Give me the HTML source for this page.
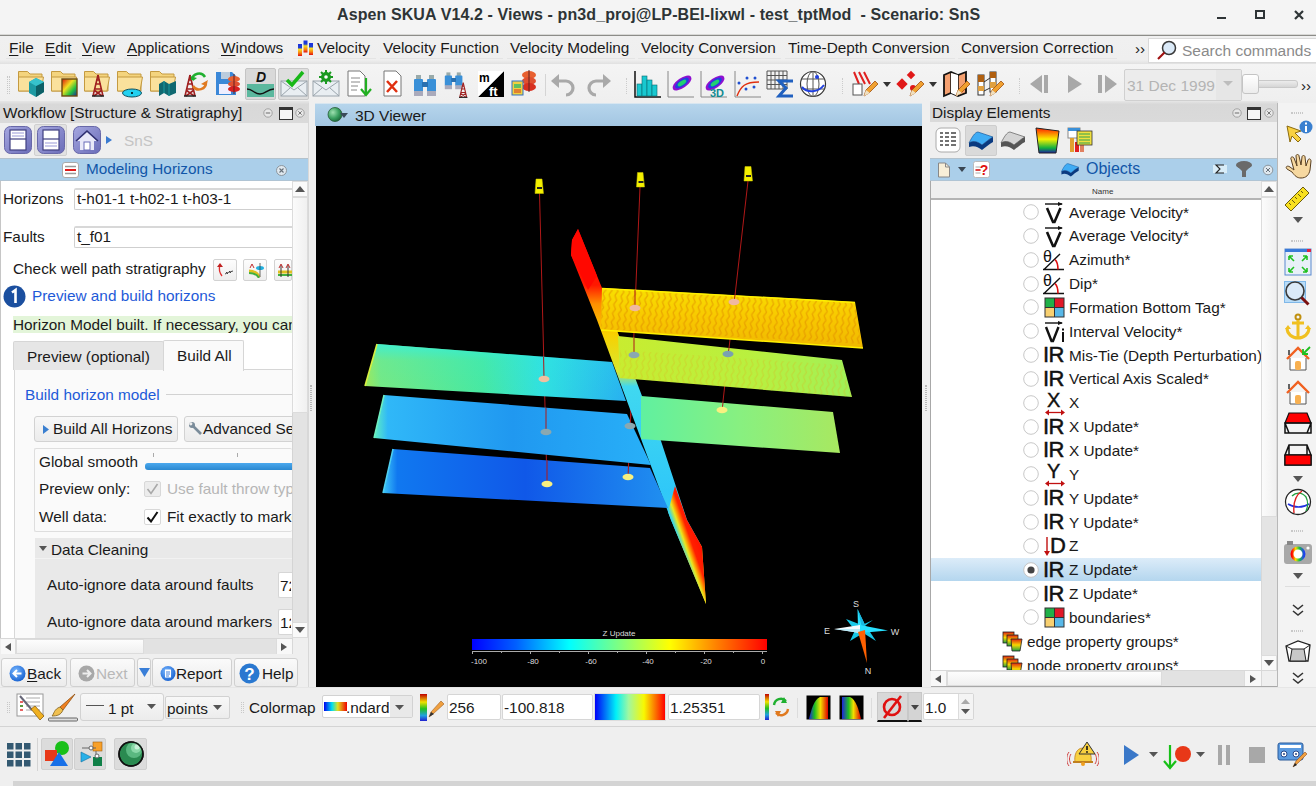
<!DOCTYPE html>
<html><head><meta charset="utf-8">
<style>
*{margin:0;padding:0;box-sizing:border-box}
html,body{width:1316px;height:786px;overflow:hidden;background:#efefef;font-family:"Liberation Sans",sans-serif;font-size:15px;color:#1a1a1a;position:relative}
.a{position:absolute;display:block}
.t{position:absolute;white-space:nowrap}
.u{text-decoration:underline;text-decoration-thickness:1px;text-underline-offset:2px}
</style></head><body>
<div class="a" style="left:0px;top:0px;width:1316px;height:35px;background:#f4f4f4"></div>
<div class="a" style="left:0px;top:35px;width:1316px;height:1px;background:#8c8c88"></div>
<div class="a" style="left:0px;top:34px;width:1316px;height:1px;background:#d8d8d6"></div>
<div class="t" style="left:337px;top:6px;font-size:16px;line-height:18px;font-weight:bold;color:#2e3436;letter-spacing:0.1px">Aspen SKUA V14.2 - Views - pn3d_proj@LP-BEI-lixwl - test_tptMod&nbsp; - Scenario: SnS</div>
<div class="a" style="left:1217px;top:17px;width:9px;height:2px;background:#2e3436"></div>
<div class="a" style="left:1255px;top:10px;width:10px;height:9px;border:2px solid #2e3436"></div>
<svg class="a" style="left:1293px;top:9px;" width="12" height="12" viewBox="0 0 12 12"><path d="M2 2L10 10M10 2L2 10" stroke="#2e3436" stroke-width="2.2"/></svg>
<div class="a" style="left:0px;top:36px;width:1316px;height:28px;background:linear-gradient(#f0f0f0,#efefef 85%,#e0e0e0)"></div>
<div class="a" style="left:6px;top:58px;width:36px;height:1px;background:#e4e4e4"></div>
<div class="t" style="left:9px;top:39px;font-size:15.35px;line-height:17.35px;"><span class="u">F</span>ile</div>
<div class="a" style="left:42px;top:58px;width:34px;height:1px;background:#e4e4e4"></div>
<div class="t" style="left:45px;top:39px;font-size:15.35px;line-height:17.35px;"><span class="u">E</span>dit</div>
<div class="a" style="left:79px;top:58px;width:36px;height:1px;background:#e4e4e4"></div>
<div class="t" style="left:82px;top:39px;font-size:15.35px;line-height:17.35px;"><span class="u">V</span>iew</div>
<div class="a" style="left:124px;top:58px;width:86px;height:1px;background:#e4e4e4"></div>
<div class="t" style="left:127px;top:39px;font-size:15.35px;line-height:17.35px;"><span class="u">A</span>pplications</div>
<div class="a" style="left:218px;top:58px;width:66px;height:1px;background:#e4e4e4"></div>
<div class="t" style="left:221px;top:39px;font-size:15.35px;line-height:17.35px;"><span class="u">W</span>indows</div>
<svg class="a" style="left:297px;top:39px;" width="17" height="18" viewBox="0 0 17 18"><defs><linearGradient id="vbar" x1="0" y1="0" x2="0" y2="1"><stop offset="0" stop-color="#1a30e0"/><stop offset=".3" stop-color="#2040d0"/><stop offset=".45" stop-color="#f8e020"/><stop offset=".75" stop-color="#f88010"/><stop offset="1" stop-color="#e01010"/></linearGradient></defs><rect x="1" y="5" width="4" height="12" fill="url(#vbar)"/><rect x="6.5" y="1.5" width="4" height="12" fill="url(#vbar)"/><rect x="12" y="4" width="4" height="12" fill="url(#vbar)"/></svg>
<div class="a" style="left:293px;top:58px;width:83px;height:1px;background:#e4e4e4"></div>
<div class="a" style="left:314px;top:58px;width:62px;height:1px;background:#e4e4e4"></div>
<div class="t" style="left:317px;top:39px;font-size:15.35px;line-height:17.35px;">Velocity</div>
<div class="a" style="left:380px;top:58px;width:123px;height:1px;background:#e4e4e4"></div>
<div class="t" style="left:383px;top:39px;font-size:15.35px;line-height:17.35px;">Velocity Function</div>
<div class="a" style="left:507px;top:58px;width:128px;height:1px;background:#e4e4e4"></div>
<div class="t" style="left:510px;top:39px;font-size:15.35px;line-height:17.35px;">Velocity Modeling</div>
<div class="a" style="left:638px;top:58px;width:143px;height:1px;background:#e4e4e4"></div>
<div class="t" style="left:641px;top:39px;font-size:15.35px;line-height:17.35px;">Velocity Conversion</div>
<div class="a" style="left:785px;top:58px;width:170px;height:1px;background:#e4e4e4"></div>
<div class="t" style="left:788px;top:39px;font-size:15.35px;line-height:17.35px;">Time-Depth Conversion</div>
<div class="a" style="left:958px;top:58px;width:159px;height:1px;background:#e4e4e4"></div>
<div class="t" style="left:961px;top:39px;font-size:15.35px;line-height:17.35px;">Conversion Correction</div>
<div class="t" style="left:1135px;top:40px;font-size:15.35px;line-height:17.35px;">&rsaquo;&rsaquo;</div>
<div class="a" style="left:1148px;top:38px;width:168px;height:25px;background:#fff;border:1px solid #d9d9d9;border-right:none"></div>
<svg class="a" style="left:1156px;top:40px;" width="22" height="22" viewBox="0 0 22 22"><circle cx="13" cy="8" r="6.5" fill="#dbeaf8" stroke="#3a3a3a" stroke-width="1.5"/><path d="M8.5 12.5L2 19" stroke="#a01010" stroke-width="2.2"/></svg>
<div class="t" style="left:1182px;top:42px;font-size:15.5px;line-height:17.5px;color:#8a8a8a">Search commands</div>
<div class="a" style="left:0px;top:64px;width:1316px;height:37px;background:linear-gradient(#f4f4f4,#efefef)"></div>
<div class="a" style="left:7px;top:76px;width:3px;height:18px;border-left:1px dotted #c8c8c8;border-right:1px dotted #c8c8c8"></div>
<svg class="a" style="left:17px;top:69px;" width="29" height="29" viewBox="0 0 29 29"><path d="M1.5 2.5h9l2.5 2.5h12v17h-23.5z" fill="#f4d47e" stroke="#c49a40" stroke-width="1"/><path d="M1.5 8h25l-2.5 14H1.5z" fill="#fae19c" stroke="#c49a40" stroke-width="1"/><path d="M12 13l7-4 8 4v10l-8 5-7-4z" fill="#1d9aa3"/><path d="M19 17l8-4v10l-8 5z" fill="#0d5f66"/><path d="M12 13l7-4 8 4-8 4z" fill="#37c2cc"/></svg>
<svg class="a" style="left:50px;top:69px;" width="29" height="29" viewBox="0 0 29 29"><path d="M1.5 2.5h9l2.5 2.5h12v17h-23.5z" fill="#f4d47e" stroke="#c49a40" stroke-width="1"/><path d="M1.5 8h25l-2.5 14H1.5z" fill="#fae19c" stroke="#c49a40" stroke-width="1"/><defs><linearGradient id="cm" x1="0" y1="0" x2="1" y2="1"><stop offset="0" stop-color="#e01010"/><stop offset=".4" stop-color="#f0e020"/><stop offset=".7" stop-color="#20c040"/><stop offset="1" stop-color="#2020a0"/></linearGradient></defs><rect x="12" y="10" width="15" height="17" fill="url(#cm)" stroke="#6a4a10" stroke-width="1.4"/></svg>
<svg class="a" style="left:83px;top:69px;" width="29" height="29" viewBox="0 0 29 29"><path d="M1.5 2.5h9l2.5 2.5h12v17h-23.5z" fill="#f4d47e" stroke="#c49a40" stroke-width="1"/><path d="M1.5 8h25l-2.5 14H1.5z" fill="#fae19c" stroke="#c49a40" stroke-width="1"/><g transform="translate(9,5)"><path d="M6 1L1 22M6 1L11 22M2 16L10 22M10 16L2 22M3 10h6M2 15h8M4 6h4" stroke="#a02020" stroke-width="1.6" fill="none"/><path d="M0 22h12" stroke="#222" stroke-width="1.5"/></g></svg>
<svg class="a" style="left:116px;top:69px;" width="29" height="29" viewBox="0 0 29 29"><path d="M1.5 2.5h9l2.5 2.5h12v17h-23.5z" fill="#f4d47e" stroke="#c49a40" stroke-width="1"/><path d="M1.5 8h25l-2.5 14H1.5z" fill="#fae19c" stroke="#c49a40" stroke-width="1"/><ellipse cx="16" cy="24" rx="9.5" ry="4" fill="#22d0f0" stroke="#105060"/><circle cx="16" cy="24" r="1" fill="#000"/></svg>
<svg class="a" style="left:149px;top:69px;" width="29" height="29" viewBox="0 0 29 29"><path d="M1.5 2.5h9l2.5 2.5h12v17h-23.5z" fill="#f4d47e" stroke="#c49a40" stroke-width="1"/><path d="M1.5 8h25l-2.5 14H1.5z" fill="#fae19c" stroke="#c49a40" stroke-width="1"/><path d="M10 15l5-3 5 3 7-3v12l-7 3-5-3-5 3z" fill="#0f6870"/><path d="M15 12v12M20 15v12" stroke="#1a9aa0" stroke-width="1"/></svg>
<svg class="a" style="left:182px;top:70px;" width="28" height="28" viewBox="0 0 28 28"><g transform="translate(2,4)"><path d="M6 1L1 22M6 1L11 22M2 16L10 22M10 16L2 22M3 10h6M2 15h8M4 6h4" stroke="#a02020" stroke-width="1.6" fill="none"/><path d="M0 22h12" stroke="#222" stroke-width="1.5"/></g><path d="M10 10a7 7 0 0 1 13-3" stroke="#20b030" stroke-width="2.5" fill="none"/><path d="M8 6l3 5 4-3z" fill="#20b030"/><path d="M24 12a7 7 0 0 1-13 4" stroke="#e07a20" stroke-width="2.5" fill="none"/><path d="M26 10l-2 6-5-2z" fill="#e07a20"/></svg>
<svg class="a" style="left:215px;top:70px;" width="28" height="28" viewBox="0 0 28 28"><path d="M1 2h16l4 4v19H1z" fill="#3b88d8"/><rect x="6" y="2" width="9" height="7" fill="#bcd"/><rect x="4" y="14" width="12" height="10" fill="#eef"/><ellipse cx="19" cy="9" rx="6" ry="3" fill="#e86030"/><ellipse cx="19" cy="14" rx="6" ry="3" fill="#e05030"/><ellipse cx="19" cy="19" rx="6" ry="3" fill="#d82020"/><path d="M19 4v20" stroke="#602020"/></svg>
<div class="a" style="left:245px;top:68px;width:31px;height:32px;background:#d9d9d9;border:1px solid #c4c4c4;border-radius:2px"></div>
<svg class="a" style="left:246px;top:69px;" width="29" height="30" viewBox="0 0 29 30"><text x="10" y="13" font-family="Liberation Sans" font-style="italic" font-weight="bold" font-size="14" fill="#111">D</text><rect x="1" y="15" width="27" height="13" fill="#5bb89e"/><path d="M1 20c6 0 7 5 13 5s7-5 14-5" stroke="#111" stroke-width="1.5" fill="none"/></svg>
<div class="a" style="left:278px;top:68px;width:31px;height:32px;background:#dedede;border:1px solid #c8c8c8;border-radius:2px"></div>
<svg class="a" style="left:280px;top:69px;" width="28" height="30" viewBox="0 0 28 30"><rect x="1" y="12" width="26" height="15" fill="#e9eef2" stroke="#9aa4ac"/><path d="M1 12l13 9 13-9M1 27l9-8M27 27l-9-8" stroke="#9aa4ac" fill="none"/><path d="M7 11l5 5 11-13" stroke="#18b818" stroke-width="3.5" fill="none"/></svg>
<svg class="a" style="left:312px;top:69px;" width="30" height="30" viewBox="0 0 30 30"><rect x="1" y="12" width="26" height="15" fill="#e9eef2" stroke="#9aa4ac"/><path d="M1 12l13 9 13-9M1 27l9-8M27 27l-9-8" stroke="#9aa4ac" fill="none"/><circle cx="14" cy="8" r="5" fill="#1a9a20"/><circle cx="14" cy="8" r="2" fill="#fff"/><path d="M14 1v14M7 8h14M9 3l10 10M19 3L9 13" stroke="#1a9a20" stroke-width="2"/><circle cx="14" cy="8" r="1.8" fill="#fff"/></svg>
<svg class="a" style="left:346px;top:70px;" width="28" height="28" viewBox="0 0 28 28"><path d="M2 1h12l5 5v20H2z" fill="#fff" stroke="#777"/><path d="M5 8h9M5 12h9M5 16h7M5 20h6" stroke="#888"/><path d="M20 8v16M15 19l5 6 5-6" stroke="#22b022" stroke-width="2.2" fill="none"/></svg>
<svg class="a" style="left:382px;top:70px;" width="24" height="28" viewBox="0 0 24 28"><path d="M2 1h12l5 5v20H2z" fill="#fff" stroke="#777"/><path d="M5 11l10 11M15 11L5 22" stroke="#e03010" stroke-width="2.5"/></svg>
<svg class="a" style="left:412px;top:70px;" width="26" height="28" viewBox="0 0 26 28"><g transform="translate(1,2)"><rect x="3" y="3" width="5" height="5" fill="#9aa"/><rect x="16" y="3" width="5" height="5" fill="#9aa"/><rect x="1" y="7" width="9" height="13" rx="1" fill="#3a90d8"/><rect x="14" y="7" width="9" height="13" rx="1" fill="#3a90d8"/><rect x="9" y="10" width="6" height="5" fill="#2a70b0"/><rect x="1" y="19" width="9" height="5" fill="#aab"/><rect x="14" y="19" width="9" height="5" fill="#aab"/></g></svg>
<svg class="a" style="left:444px;top:70px;" width="28" height="28" viewBox="0 0 28 28"><g transform="translate(0,0) scale(0.8)"><rect x="3" y="3" width="5" height="5" fill="#9aa"/><rect x="16" y="3" width="5" height="5" fill="#9aa"/><rect x="1" y="7" width="9" height="13" rx="1" fill="#3a90d8"/><rect x="14" y="7" width="9" height="13" rx="1" fill="#3a90d8"/><rect x="9" y="10" width="6" height="5" fill="#2a70b0"/><rect x="1" y="19" width="9" height="5" fill="#aab"/><rect x="14" y="19" width="9" height="5" fill="#aab"/></g><g transform="translate(15,12) scale(0.7)"><path d="M6 1L1 22M6 1L11 22M2 16L10 22M10 16L2 22M3 10h6M2 15h8M4 6h4" stroke="#a02020" stroke-width="1.6" fill="none"/><path d="M0 22h12" stroke="#222" stroke-width="1.5"/></g></svg>
<svg class="a" style="left:477px;top:69px;" width="28" height="30" viewBox="0 0 28 30"><path d="M27 2v26H1z" fill="#000"/><path d="M1 2h26L1 28z" fill="#fff"/><text x="2" y="13" font-family="Liberation Sans" font-weight="bold" font-size="12" fill="#000">m</text><text x="12" y="27" font-family="Liberation Sans" font-weight="bold" font-size="13" fill="#fff">ft</text></svg>
<svg class="a" style="left:510px;top:69px;" width="28" height="30" viewBox="0 0 28 30"><ellipse cx="19" cy="6" rx="7" ry="4" fill="#e86030"/><ellipse cx="19" cy="12" rx="7" ry="4" fill="#e05030"/><ellipse cx="19" cy="18" rx="7" ry="4" fill="#d83020"/><path d="M19 1v22" stroke="#602020"/><rect x="2" y="12" width="11" height="14" fill="#f0d040" stroke="#3070c0"/><rect x="4" y="15" width="7" height="4" fill="#60c060"/><rect x="4" y="20" width="7" height="4" fill="#e08030"/></svg>
<div class="a" style="left:545px;top:74px;width:1px;height:22px;background:#d4d4d4"></div>
<svg class="a" style="left:550px;top:70px;" width="28" height="28" viewBox="0 0 28 28"><path d="M6 11h10a7 7 0 0 1 0 14" stroke="#a9a9a9" stroke-width="3.2" fill="none"/><path d="M1 11l8-7v14z" fill="#a9a9a9"/></svg>
<svg class="a" style="left:584px;top:70px;" width="28" height="28" viewBox="0 0 28 28"><path d="M22 11H12a7 7 0 0 0 0 14" stroke="#a9a9a9" stroke-width="3.2" fill="none"/><path d="M27 11l-8-7v14z" fill="#a9a9a9"/></svg>
<div class="a" style="left:626px;top:78px;width:1px;height:16px;border-left:1px dotted #ccc"></div>
<svg class="a" style="left:634px;top:70px;" width="28" height="28" viewBox="0 0 28 28"><path d="M1 1v26h26" stroke="#111" stroke-width="1.5" fill="none"/><rect x="3" y="14" width="5" height="12" fill="#18c8d0" stroke="#0a6a70" stroke-width=".6"/><rect x="8" y="6" width="5" height="20" fill="#18c8d0" stroke="#0a6a70" stroke-width=".6"/><rect x="13" y="10" width="5" height="16" fill="#18c8d0" stroke="#0a6a70" stroke-width=".6"/><rect x="18" y="15" width="5" height="11" fill="#18c8d0" stroke="#0a6a70" stroke-width=".6"/></svg>
<svg class="a" style="left:667px;top:70px;" width="28" height="28" viewBox="0 0 28 28"><path d="M1 1v26h26" stroke="#888" stroke-width="1" fill="none"/><ellipse cx="15" cy="13" rx="11" ry="5" transform="rotate(-35 15 13)" fill="#9010d0"/><ellipse cx="15" cy="13" rx="8" ry="3.5" transform="rotate(-35 15 13)" fill="#2040e0"/><ellipse cx="15" cy="13" rx="5" ry="2" transform="rotate(-35 15 13)" fill="#20d070"/></svg>
<svg class="a" style="left:700px;top:70px;" width="28" height="28" viewBox="0 0 28 28"><path d="M1 1v26h26" stroke="#888" stroke-width="1" fill="none"/><ellipse cx="15" cy="13" rx="11" ry="5" transform="rotate(-35 15 13)" fill="#9010d0"/><ellipse cx="15" cy="13" rx="8" ry="3.5" transform="rotate(-35 15 13)" fill="#2040e0"/><ellipse cx="15" cy="13" rx="5" ry="2" transform="rotate(-35 15 13)" fill="#20d070"/><text x="10" y="27" font-family="Liberation Sans" font-weight="bold" font-size="11" fill="#108a90">3D</text></svg>
<svg class="a" style="left:734px;top:70px;" width="28" height="28" viewBox="0 0 28 28"><path d="M1 1v26h26" stroke="#888" stroke-width="1" fill="none"/><path d="M3 26c4-10 8-14 22-14" stroke="#e03010" stroke-width="1.5" fill="none"/><circle cx="5" cy="13" r="1.5" fill="#2050d0"/><circle cx="13" cy="8" r="1.5" fill="#2050d0"/><circle cx="21" cy="8" r="1.5" fill="#2050d0"/><circle cx="12" cy="19" r="1.5" fill="#2050d0"/><circle cx="20" cy="17" r="1.5" fill="#2050d0"/></svg>
<svg class="a" style="left:766px;top:70px;" width="30" height="28" viewBox="0 0 30 28"><path d="M1 1h20v18H1zM1 5.5h20M1 10h20M1 14.5h20M5 1v18M9 1v18M13 1v18M17 1v18" stroke="#555" stroke-width="1" fill="none"/><path d="M27 11H13l7 7-7 8h14" stroke="#2060c0" stroke-width="3" fill="none"/></svg>
<svg class="a" style="left:799px;top:70px;" width="28" height="28" viewBox="0 0 28 28"><circle cx="14" cy="14" r="12.5" fill="#fff" stroke="#333" stroke-width="1.2"/><ellipse cx="14" cy="14" rx="6" ry="12.5" fill="none" stroke="#555"/><path d="M2 9h24M2 19h24M14 1.5v25" stroke="#555"/><path d="M3 17c5 6 16 6 22-2" stroke="#2040e0" stroke-width="2" fill="none"/><circle cx="18" cy="7" r="2" fill="#2040e0"/></svg>
<div class="a" style="left:842px;top:78px;width:1px;height:16px;border-left:1px dotted #ccc"></div>
<svg class="a" style="left:850px;top:70px;" width="30" height="30" viewBox="0 0 30 30"><path d="M4 2l5 12M9 2l6 12M14 2l6 12" stroke="#e02020" stroke-width="2"/><rect x="3" y="14" width="9" height="11" fill="#fff" stroke="#555"/><path d="M14 26l2-6 9-9 3 3-9 9z" fill="#f0a030" stroke="#a05010" stroke-width=".8"/><path d="M14 26l2-6 4 3z" fill="#f0e0c0"/></svg>
<svg class="a" style="left:882px;top:80px;" width="10" height="8" viewBox="0 0 10 8"><path d="M1 2h8l-4 5z" fill="#333"/></svg>
<svg class="a" style="left:896px;top:70px;" width="30" height="30" viewBox="0 0 30 30"><rect x="2" y="10" width="8" height="8" transform="rotate(45 6 14)" fill="#e01818"/><rect x="12" y="2" width="6" height="6" transform="rotate(45 15 5)" fill="#e01818"/><circle cx="17" cy="18" r="3" fill="#e01818"/><path d="M14 26l2-6 9-9 3 3-9 9z" fill="#f0a030" stroke="#a05010" stroke-width=".8"/><path d="M14 26l2-6 4 3z" fill="#f0e0c0"/></svg>
<svg class="a" style="left:928px;top:80px;" width="10" height="8" viewBox="0 0 10 8"><path d="M1 2h8l-4 5z" fill="#333"/></svg>
<svg class="a" style="left:942px;top:70px;" width="30" height="30" viewBox="0 0 30 30"><path d="M2 5l7-3 7 3 8-3v21l-8 3-7-3-7 3z" fill="#f4a070" stroke="#111" stroke-width="1.8"/><path d="M9 2v21M16 5v21" stroke="#111" stroke-width="1.5"/><path d="M9 3l7 2v21l-7-3z" fill="#fff"/><path d="M14 26l2-6 9-9 3 3-9 9z" fill="#f0a030" stroke="#a05010" stroke-width=".8"/><path d="M14 26l2-6 4 3z" fill="#f0e0c0"/></svg>
<svg class="a" style="left:976px;top:70px;" width="30" height="30" viewBox="0 0 30 30"><rect x="2" y="5" width="6" height="20" fill="#fff" stroke="#333"/><rect x="2" y="5" width="6" height="7" fill="#b06010"/><rect x="2" y="16" width="6" height="5" fill="#e0a040"/><rect x="14" y="2" width="6" height="20" fill="#fff" stroke="#333"/><rect x="14" y="2" width="6" height="6" fill="#b06010"/><rect x="14" y="12" width="6" height="6" fill="#e0a040"/><path d="M8 12l6-4M8 21l6-3" stroke="#333"/><path d="M14 26l2-6 9-9 3 3-9 9z" fill="#f0a030" stroke="#a05010" stroke-width=".8"/><path d="M14 26l2-6 4 3z" fill="#f0e0c0"/></svg>
<div class="a" style="left:1019px;top:78px;width:1px;height:16px;border-left:1px dotted #ccc"></div>
<svg class="a" style="left:1028px;top:72px;" width="24" height="24" viewBox="0 0 24 24"><path d="M14 3L2 12l12 9z" fill="#a8a8a8"/><rect x="16" y="3" width="4" height="18" fill="#a8a8a8"/></svg>
<svg class="a" style="left:1063px;top:72px;" width="24" height="24" viewBox="0 0 24 24"><path d="M5 3l14 9-14 9z" fill="#a8a8a8"/></svg>
<svg class="a" style="left:1096px;top:72px;" width="24" height="24" viewBox="0 0 24 24"><rect x="2" y="3" width="4" height="18" fill="#a8a8a8"/><path d="M9 3l12 9-12 9z" fill="#a8a8a8"/></svg>
<div class="a" style="left:1124px;top:69px;width:118px;height:32px;background:#ececec;border:1px solid #d0d0d0;border-radius:2px"></div>
<div class="a" style="left:1216px;top:70px;width:25px;height:30px;background:#e6e6e6"></div>
<div class="t" style="left:1127px;top:77px;font-size:15.5px;line-height:17.5px;color:#b4b4b4">31 Dec 1999</div>
<svg class="a" style="left:1222px;top:80px;" width="12" height="8" viewBox="0 0 12 8"><path d="M1 1h10l-5 5z" fill="#bdbdbd"/></svg>
<div class="a" style="left:1244px;top:80px;width:54px;height:8px;background:linear-gradient(#ececec,#d6d6d6);border:1px solid #c9c9c9;border-radius:3px"></div>
<div class="a" style="left:1242px;top:74px;width:17px;height:20px;background:linear-gradient(#fff,#ececec);border:1px solid #c4c4c4;border-radius:3px"></div>
<div class="t" style="left:1301px;top:77px;font-size:15.35px;line-height:17.35px;color:#222">&rsaquo;&rsaquo;</div>
<div class="a" style="left:0px;top:103px;width:309px;height:584px;background:#efefef"></div>
<div class="a" style="left:0px;top:101px;width:309px;height:22px;background:linear-gradient(#e6e6e6,#d8d8d8 16%,#dadada)"></div>
<div class="t" style="left:3px;top:104px;font-size:15.35px;line-height:17.35px;">Workflow [Structure &amp; Stratigraphy]</div>
<svg class="a" style="left:262px;top:107px;" width="12" height="12" viewBox="0 0 12 12"><circle cx="6" cy="6" r="4.2" fill="#e8e8e8" stroke="#9a9a9a" stroke-width=".9"/><path d="M3.8 6h4.4" stroke="#777" stroke-width="1.1"/></svg>
<div class="a" style="left:279px;top:107px;width:14px;height:13px;border:1.6px solid #333;border-top:3px solid #333;background:#f6f6f6"></div>
<svg class="a" style="left:294px;top:107px;" width="12" height="12" viewBox="0 0 12 12"><circle cx="6" cy="6" r="4.2" fill="#e8e8e8" stroke="#9a9a9a" stroke-width=".9"/><path d="M4.3 4.3l3.4 3.4M7.7 4.3l-3.4 3.4" stroke="#777" stroke-width="1"/></svg>
<svg class="a" style="left:4px;top:126px;" width="28" height="28" viewBox="0 0 28 28"><defs><linearGradient id="pg" x1="0" y1="0" x2="1" y2="1"><stop offset="0" stop-color="#a6a8e0"/><stop offset="1" stop-color="#6a6cb8"/></linearGradient></defs><rect x="0.5" y="0.5" width="27" height="27" rx="6" fill="url(#pg)" stroke="#6868a8"/><rect x="6" y="4" width="16" height="20" fill="#fff" stroke="#404080" stroke-width="1.2"/><path d="M6 13h16" stroke="#404080" stroke-width="1.2"/><path d="M8 7h12M8 10h12" stroke="#9a9ad8" stroke-width="1.2"/></svg>
<div class="a" style="left:34px;top:124px;width:33px;height:32px;background:#e2e2e2;border:1px solid #d0d0d0;border-radius:2px"></div>
<svg class="a" style="left:37px;top:126px;" width="28" height="28" viewBox="0 0 28 28"><defs><linearGradient id="pg" x1="0" y1="0" x2="1" y2="1"><stop offset="0" stop-color="#a6a8e0"/><stop offset="1" stop-color="#6a6cb8"/></linearGradient></defs><rect x="0.5" y="0.5" width="27" height="27" rx="6" fill="url(#pg)" stroke="#6868a8"/><rect x="6" y="4" width="16" height="20" fill="#fff" stroke="#404080" stroke-width="1.2"/><path d="M6 13h16" stroke="#404080" stroke-width="1.2"/><path d="M8 17h12M8 20h12" stroke="#9a9ad8" stroke-width="1.2"/></svg>
<svg class="a" style="left:73px;top:126px;" width="28" height="28" viewBox="0 0 28 28"><defs><linearGradient id="pg" x1="0" y1="0" x2="1" y2="1"><stop offset="0" stop-color="#a6a8e0"/><stop offset="1" stop-color="#6a6cb8"/></linearGradient></defs><rect x="0.5" y="0.5" width="27" height="27" rx="6" fill="url(#pg)" stroke="#6868a8"/><path d="M14 6l10 9h-3v9H7v-9H4z" fill="#e8e8f8"/><path d="M3 15L14 5l11 10" stroke="#303070" stroke-width="1.6" fill="none"/><rect x="11" y="16" width="6" height="8" fill="#fff" stroke="#6a6cb8"/></svg>
<svg class="a" style="left:105px;top:135px;" width="8" height="10" viewBox="0 0 8 10"><path d="M1 1l6 4-6 4z" fill="#3a7ad0"/></svg>
<div class="t" style="left:124px;top:132px;font-size:15.35px;line-height:17.35px;color:#c4c4c4">SnS</div>
<div class="a" style="left:0px;top:158px;width:309px;height:23px;background:#abcfea;border-top:1px solid #b4c2cc;border-bottom:1px solid #b0c4d4"></div>
<svg class="a" style="left:62px;top:162px;" width="17" height="16" viewBox="0 0 17 16"><rect x="0.5" y="0.5" width="16" height="15" rx="2.5" fill="#fff" stroke="#aaa"/><path d="M3 4.5h11M3 11.5h11" stroke="#999" stroke-width="1.3"/><path d="M3 8h11" stroke="#e01818" stroke-width="2"/></svg>
<div class="t" style="left:86px;top:160px;font-size:15.3px;line-height:17.3px;color:#1156a8">Modeling Horizons</div>
<svg class="a" style="left:275px;top:164px;" width="13" height="13" viewBox="0 0 13 13"><circle cx="6.5" cy="6.5" r="5" fill="#dfe8ef" stroke="#8c969e"/><path d="M4.5 4.5l4 4M8.5 4.5l-4 4" stroke="#66707a" stroke-width="1.1"/></svg>
<div class="a" style="left:0px;top:181px;width:292px;height:457px;background:#fff;border-left:1px solid #c6c6c6"></div>
<div class="t" style="left:3px;top:190px;font-size:15.35px;line-height:17.35px;">Horizons</div>
<div class="a" style="left:74px;top:188px;width:218px;height:22px;background:#fff;border:1px solid #cfcfcf;border-top:2px solid #d8d8d8;border-right:none;border-radius:2px 0 0 2px"></div>
<div class="t" style="left:77px;top:190px;font-size:15.35px;line-height:17.35px;">t-h01-1 t-h02-1 t-h03-1</div>
<div class="t" style="left:3px;top:228px;font-size:15.35px;line-height:17.35px;">Faults</div>
<div class="a" style="left:74px;top:226px;width:218px;height:22px;background:#fff;border:1px solid #cfcfcf;border-top:2px solid #d8d8d8;border-right:none;border-radius:2px 0 0 2px"></div>
<div class="t" style="left:77px;top:228px;font-size:15.35px;line-height:17.35px;">t_f01</div>
<div class="t" style="left:13px;top:260px;font-size:15.35px;line-height:17.35px;">Check well path stratigraphy</div>
<div class="a" style="left:213px;top:259px;width:24px;height:22px;background:linear-gradient(#fdfdfd,#eeeeee);border:1px solid #d2d2d2;border-radius:2px"></div>
<div class="a" style="left:243px;top:259px;width:24px;height:22px;background:linear-gradient(#fdfdfd,#eeeeee);border:1px solid #d2d2d2;border-radius:2px"></div>
<div class="a" style="left:274px;top:259px;width:18px;height:22px;background:linear-gradient(#fdfdfd,#eeeeee);border:1px solid #d2d2d2;border-radius:2px"></div>
<svg class="a" style="left:216px;top:262px;" width="20" height="16" viewBox="0 0 20 16"><path d="M6 14C3 10 3 6 4 3" stroke="#e03030" stroke-width="1.3" fill="none"/><path d="M1 5l3-4 3 4z" fill="#c02020"/><path d="M9 12c2-1 4-2 8-3M10 10l2 2M13 9l2 2" stroke="#333" stroke-width=".9" fill="none"/></svg>
<svg class="a" style="left:246px;top:262px;" width="20" height="16" viewBox="0 0 20 16"><path d="M3 9c3 0 8 1 10 6" stroke="#e0c020" stroke-width="3" fill="none"/><path d="M3 11c3 0 8 1 10 5" stroke="#40b040" stroke-width="2" fill="none"/><ellipse cx="14" cy="6" rx="4" ry="2" fill="#20b0e0"/><path d="M14 1v14" stroke="#444" stroke-width=".8"/><path d="M4 6l2-4 2 4" stroke="#c03030" fill="none"/></svg>
<svg class="a" style="left:277px;top:262px;" width="15" height="16" viewBox="0 0 15 16"><path d="M1 10h14" stroke="#e0c020" stroke-width="3"/><path d="M1 13h14" stroke="#40b040" stroke-width="2"/><path d="M4 3v12M11 3v12" stroke="#333"/><path d="M2 6l2-4 2 4M9 6l2-4 2 4" stroke="#c03030" fill="none"/></svg>
<svg class="a" style="left:3px;top:285px;" width="23" height="23" viewBox="0 0 23 23"><circle cx="11.5" cy="11.5" r="11" fill="#1b4f9f"/><path d="M9 7.5l3.5-2.5v13" stroke="#fff" stroke-width="2.6" fill="none"/></svg>
<div class="t" style="left:32px;top:287px;font-size:15.35px;line-height:17.35px;color:#1e5ad8">Preview and build horizons</div>
<div class="a" style="left:13px;top:316px;width:279px;height:17px;background:#e3f5d9"></div>
<div class="a" style="left:13px;top:314px;width:279px;height:20px;overflow:hidden"><div class="t" style="left:0;top:2px;font-size:15.35px;line-height:17px">Horizon Model built. If necessary, you can edit the parameters</div></div>
<div class="a" style="left:13px;top:341px;width:151px;height:29px;background:#e6e6e6;border:1px solid #d6d6d6;border-bottom:none;border-radius:2px 2px 0 0"></div>
<div class="t" style="left:27px;top:348px;font-size:15.35px;line-height:17.35px;">Preview (optional)</div>
<div class="a" style="left:14px;top:370px;width:278px;height:268px;background:#fafafa;border-left:1px solid #d8d8d8"></div>
<div class="a" style="left:244px;top:369px;width:48px;height:1px;background:#d6d6d6"></div>
<div class="a" style="left:163px;top:340px;width:81px;height:31px;background:#fafafa;border:1px solid #d6d6d6;border-bottom:none;border-radius:2px 2px 0 0"></div>
<div class="t" style="left:177px;top:347px;font-size:15.35px;line-height:17.35px;">Build All</div>
<div class="t" style="left:25px;top:386px;font-size:15.35px;line-height:17.35px;color:#1e5ad8">Build horizon model</div>
<div class="a" style="left:166px;top:394px;width:126px;height:1px;background:#d2d2d2"></div>
<div class="a" style="left:34px;top:416px;width:144px;height:26px;background:linear-gradient(#f7f7f7,#ebebeb);border:1px solid #d2d2d2;border-radius:3px"></div>
<svg class="a" style="left:42px;top:424px;" width="8" height="11" viewBox="0 0 8 11"><path d="M1 1l6 4.5-6 4.5z" fill="#3a7fd0"/></svg>
<div class="t" style="left:53px;top:420px;font-size:15.35px;line-height:17.35px;">Build All Horizons</div>
<div class="a" style="left:184px;top:416px;width:108px;height:26px;overflow:hidden"><div class="a" style="left:0;top:0;width:130px;height:26px;background:linear-gradient(#f7f7f7,#ebebeb);border:1px solid #d2d2d2;border-radius:3px"></div><svg class="a" style="left:4px;top:5px" width="16" height="16" viewBox="0 0 16 16"><path d="M3 3l10 10" stroke="#7a8c9a" stroke-width="2.6"/><circle cx="4" cy="4" r="3" fill="#7a8c9a"/><circle cx="2.8" cy="2.8" r="1.6" fill="#ececec"/></svg><div class="t" style="left:19px;top:4px;font-size:15.35px;line-height:17px">Advanced Settings</div></div>
<div class="a" style="left:34px;top:448px;width:258px;height:84px;background:#fafafa;border:1px solid #dedede;border-right:none;border-radius:2px"></div>
<div class="t" style="left:39px;top:453px;font-size:15.35px;line-height:17.35px;">Global smooth</div>
<div class="a" style="left:153px;top:453px;width:1px;height:4px;background:#aaa"></div>
<div class="a" style="left:237px;top:453px;width:1px;height:4px;background:#aaa"></div>
<div class="a" style="left:145px;top:463px;width:147px;height:7px;background:linear-gradient(#4aa8ee,#2a88d0);border-radius:3px 0 0 3px"></div>
<div class="t" style="left:39px;top:480px;font-size:15.35px;line-height:17.35px;">Preview only:</div>
<div class="a" style="left:144px;top:481px;width:17px;height:16px;background:#ececec;border:1px solid #d8d8d8;border-radius:2px"></div>
<svg class="a" style="left:146px;top:483px;" width="13" height="12" viewBox="0 0 13 12"><path d="M1.5 6l3.5 4.5L11.5 1" stroke="#a8a8a8" stroke-width="1.6" fill="none"/></svg>
<div class="t" style="left:167px;top:480px;font-size:15.35px;line-height:17.35px;color:#b6b6b6">Use fault throw type</div>
<div class="t" style="left:39px;top:508px;font-size:15.35px;line-height:17.35px;">Well data:</div>
<div class="a" style="left:144px;top:509px;width:17px;height:16px;background:#fff;border:1px solid #d8d8d8;border-radius:2px"></div>
<svg class="a" style="left:146px;top:511px;" width="13" height="12" viewBox="0 0 13 12"><path d="M1.5 6.5l3.5 4L11.5 1" stroke="#111" stroke-width="2" fill="none"/></svg>
<div class="t" style="left:167px;top:508px;font-size:15.35px;line-height:17.35px;">Fit exactly to markers</div>
<div class="a" style="left:35px;top:538px;width:257px;height:100px;background:#e9e9e9"></div>
<div class="a" style="left:35px;top:558px;width:257px;height:1px;background:#f2f2f2"></div>
<svg class="a" style="left:38px;top:545px;" width="10" height="7" viewBox="0 0 10 7"><path d="M1 1h8l-4 5z" fill="#555"/></svg>
<div class="t" style="left:51px;top:541px;font-size:15.35px;line-height:17.35px;">Data Cleaning</div>
<div class="t" style="left:47px;top:576px;font-size:15.35px;line-height:17.35px;">Auto-ignore data around faults</div>
<div class="a" style="left:278px;top:572px;width:14px;height:26px;background:#fff;border:1px solid #d6d6d6;border-right:none;border-radius:2px 0 0 2px"></div>
<div class="a" style="left:280px;top:574px;width:11px;height:22px;overflow:hidden"><div class="t" style="left:0;top:3px;font-size:15.35px;line-height:17px">72</div></div>
<div class="t" style="left:47px;top:613px;font-size:15.35px;line-height:17.35px;">Auto-ignore data around markers</div>
<div class="a" style="left:278px;top:609px;width:14px;height:26px;background:#fff;border:1px solid #d6d6d6;border-right:none;border-radius:2px 0 0 2px"></div>
<div class="a" style="left:280px;top:611px;width:11px;height:22px;overflow:hidden"><div class="t" style="left:0;top:3px;font-size:15.35px;line-height:17px">12</div></div>
<div class="a" style="left:292px;top:181px;width:16px;height:457px;background:#e3e3e3;border-left:1px solid #d4d4d4;border-right:1px solid #d8d8d8"></div>
<div class="a" style="left:292px;top:197px;width:16px;height:216px;background:linear-gradient(90deg,#fbfbfb,#f0f0f0);border:1px solid #dcdcdc"></div>
<div class="a" style="left:292px;top:181px;width:16px;height:16px;background:#fafafa;border:1px solid #dcdcdc"></div>
<svg class="a" style="left:294px;top:185px;" width="12" height="8" viewBox="0 0 12 8"><path d="M1 7h10L6 1z" fill="#555"/></svg>
<div class="a" style="left:292px;top:622px;width:16px;height:16px;background:#fafafa;border:1px solid #dcdcdc"></div>
<svg class="a" style="left:294px;top:626px;" width="12" height="8" viewBox="0 0 12 8"><path d="M1 1h10L6 7z" fill="#555"/></svg>
<div class="a" style="left:0px;top:638px;width:308px;height:16px;background:#efefef;border-top:1px solid #d8d8d8"></div>
<div class="a" style="left:1px;top:639px;width:15px;height:15px;background:#f8f8f8;border-right:1px solid #dcdcdc"></div>
<svg class="a" style="left:4px;top:642px;" width="8" height="10" viewBox="0 0 8 10"><path d="M7 1v8L1 5z" fill="#555"/></svg>
<div class="a" style="left:16px;top:639px;width:128px;height:15px;background:linear-gradient(#fdfdfd,#f0f0f0);border:1px solid #dcdcdc"></div>
<div class="a" style="left:144px;top:639px;width:132px;height:15px;background:#e2e2e2"></div>
<div class="a" style="left:276px;top:639px;width:16px;height:15px;background:#f8f8f8;border-left:1px solid #dcdcdc"></div>
<svg class="a" style="left:280px;top:642px;" width="8" height="10" viewBox="0 0 8 10"><path d="M1 1v8l6-4z" fill="#555"/></svg>
<div class="a" style="left:292px;top:638px;width:16px;height:16px;background:#efefef;border-left:1px solid #d8d8d8"></div>
<div class="a" style="left:308px;top:103px;width:1px;height:584px;background:#d8d8d8"></div>
<div class="a" style="left:1px;top:658px;width:66px;height:29px;background:linear-gradient(#fafafa,#ececec);border:1px solid #d0d0d0;border-radius:3px;"></div>
<div class="a" style="left:70px;top:658px;width:65px;height:29px;background:linear-gradient(#fafafa,#ececec);border:1px solid #d0d0d0;border-radius:3px;"></div>
<div class="a" style="left:137px;top:658px;width:14px;height:29px;background:linear-gradient(#fafafa,#ececec);border:1px solid #d0d0d0;border-radius:3px;"></div>
<div class="a" style="left:152px;top:658px;width:80px;height:29px;background:linear-gradient(#fafafa,#ececec);border:1px solid #d0d0d0;border-radius:3px;"></div>
<div class="a" style="left:234px;top:658px;width:64px;height:29px;background:linear-gradient(#fafafa,#ececec);border:1px solid #d0d0d0;border-radius:3px;"></div>
<svg class="a" style="left:9px;top:665px;" width="17" height="17" viewBox="0 0 17 17"><defs><radialGradient id="bg1" cx=".4" cy=".35" r=".7"><stop offset="0" stop-color="#7ab8ff"/><stop offset="1" stop-color="#1560d0"/></radialGradient></defs><circle cx="8.5" cy="8.5" r="8" fill="url(#bg1)"/><path d="M12.5 8.5H5M8 5l-3.5 3.5L8 12" stroke="#fff" stroke-width="2" fill="none"/></svg>
<div class="t" style="left:27px;top:665px;font-size:15.35px;line-height:17.35px;"><span class="u">B</span>ack</div>
<svg class="a" style="left:78px;top:665px;" width="17" height="17" viewBox="0 0 17 17"><circle cx="8.5" cy="8.5" r="8" fill="#a8a8a8"/><path d="M4.5 8.5H12M9 5l3.5 3.5L9 12" stroke="#eee" stroke-width="2" fill="none"/></svg>
<div class="t" style="left:96px;top:665px;font-size:15.35px;line-height:17.35px;color:#b8b8b8">Next</div>
<svg class="a" style="left:138px;top:667px;" width="13" height="11" viewBox="0 0 13 11"><path d="M1 1h11L6.5 10z" fill="#3a7fd8"/></svg>
<svg class="a" style="left:160px;top:665px;" width="16" height="17" viewBox="0 0 16 17"><defs><radialGradient id="bg2" cx=".4" cy=".35" r=".7"><stop offset="0" stop-color="#7ab8ff"/><stop offset="1" stop-color="#1560d0"/></radialGradient></defs><circle cx="8" cy="8.5" r="7.5" fill="url(#bg2)"/><rect x="5" y="4.5" width="6" height="8" fill="#fff"/><path d="M6 7h4M6 9h4M6 11h3" stroke="#1560d0" stroke-width=".8"/></svg>
<div class="t" style="left:176px;top:665px;font-size:15.35px;line-height:17.35px;">Report</div>
<svg class="a" style="left:239px;top:663px;" width="21" height="21" viewBox="0 0 21 21"><circle cx="10.5" cy="10.5" r="10" fill="#2a78d0"/><text x="10.5" y="17" text-anchor="middle" font-family="Liberation Sans" font-weight="bold" font-size="17" fill="#fff">?</text></svg>
<div class="t" style="left:262px;top:665px;font-size:15.35px;line-height:17.35px;">Help</div>
<div class="a" style="left:309px;top:103px;width:7px;height:584px;background:#efefef"></div>
<div class="a" style="left:310px;top:385px;width:2px;height:26px;border-left:1px dotted #b8b8b8;border-right:1px dotted #b8b8b8"></div>
<div class="a" style="left:315px;top:103px;width:608px;height:23px;background:linear-gradient(#b6d5ec,#a3c6e2);border-top:1px solid #d8e6f0"></div>
<svg class="a" style="left:327px;top:106px;" width="24" height="17" viewBox="0 0 24 17"><defs><radialGradient id="vg" cx=".35" cy=".35" r=".7"><stop offset="0" stop-color="#9ee0b0"/><stop offset=".6" stop-color="#3aa060"/><stop offset="1" stop-color="#1a6a3a"/></radialGradient></defs><circle cx="8" cy="8.5" r="7" fill="url(#vg)" stroke="#2a5a3a" stroke-width=".8"/><path d="M13 7h8l-4 5z" fill="#3a4a5a"/></svg>
<div class="t" style="left:355px;top:107px;font-size:15.5px;line-height:17.5px;">3D Viewer</div>
<svg class="a" style="left:316px;top:126px" width="606" height="561" viewBox="316 126 606 561">
<defs>
<linearGradient id="h1l" x1="365" y1="0" x2="626" y2="0" gradientUnits="userSpaceOnUse"><stop offset="0" stop-color="#a8e850"/><stop offset=".06" stop-color="#78e880"/><stop offset=".45" stop-color="#48e8a0"/><stop offset=".68" stop-color="#30e0e0"/><stop offset="1" stop-color="#28b0f0"/></linearGradient><linearGradient id="h1lv" x1="0" y1="344" x2="0" y2="400" gradientUnits="userSpaceOnUse"><stop offset="0" stop-color="#30f0e8" stop-opacity=".75"/><stop offset=".3" stop-color="#30f0e8" stop-opacity=".15"/><stop offset="1" stop-color="#30f0e8" stop-opacity="0"/></linearGradient>
<linearGradient id="h2l" x1="374" y1="0" x2="651" y2="0" gradientUnits="userSpaceOnUse"><stop offset="0" stop-color="#60f0c0"/><stop offset=".05" stop-color="#30b8f8"/><stop offset=".5" stop-color="#2098f0"/><stop offset="1" stop-color="#28b0f8"/></linearGradient>
<linearGradient id="h3l" x1="383" y1="0" x2="668" y2="0" gradientUnits="userSpaceOnUse"><stop offset="0" stop-color="#40c8f8"/><stop offset=".05" stop-color="#1078f0"/><stop offset=".5" stop-color="#1058e8"/><stop offset="1" stop-color="#2090f0"/></linearGradient>
<linearGradient id="h1r" x1="0" y1="288" x2="0" y2="348" gradientUnits="userSpaceOnUse"><stop offset="0" stop-color="#f8e000"/><stop offset=".5" stop-color="#f8c800"/><stop offset="1" stop-color="#f0b800"/></linearGradient>
<linearGradient id="h2r" x1="618" y1="0" x2="852" y2="0" gradientUnits="userSpaceOnUse"><stop offset="0" stop-color="#c8ec30"/><stop offset=".6" stop-color="#b8f040"/><stop offset="1" stop-color="#a0f058"/></linearGradient>
<linearGradient id="h3r" x1="641" y1="0" x2="840" y2="0" gradientUnits="userSpaceOnUse"><stop offset="0" stop-color="#60f0a0"/><stop offset=".5" stop-color="#88f080"/><stop offset="1" stop-color="#a8e860"/></linearGradient>
<linearGradient id="ft" x1="0" y1="229" x2="0" y2="604" gradientUnits="userSpaceOnUse"><stop offset="0" stop-color="#ff0000"/><stop offset=".15" stop-color="#ff1800"/><stop offset=".2" stop-color="#ff9000"/><stop offset=".28" stop-color="#f8d000"/><stop offset=".38" stop-color="#d8e830"/><stop offset=".42" stop-color="#40d8f0"/><stop offset=".7" stop-color="#30c8f8"/><stop offset=".8" stop-color="#38d0f0"/><stop offset=".85" stop-color="#e0e020"/><stop offset="1" stop-color="#f8c000"/></linearGradient>
<linearGradient id="cb" x1="0" y1="0" x2="1" y2="0"><stop offset="0" stop-color="#0000ff"/><stop offset=".15" stop-color="#0060ff"/><stop offset=".33" stop-color="#00ffff"/><stop offset=".5" stop-color="#80ff80"/><stop offset=".67" stop-color="#ffff00"/><stop offset=".83" stop-color="#ff8000"/><stop offset="1" stop-color="#ff0000"/></linearGradient>
<linearGradient id="fl" x1="667" y1="520" x2="690" y2="512" gradientUnits="userSpaceOnUse"><stop offset="0" stop-color="#30c0f8"/><stop offset=".2" stop-color="#40d8e0"/><stop offset=".38" stop-color="#e8e820"/><stop offset=".5" stop-color="#ff9000"/><stop offset=".65" stop-color="#ff2000"/><stop offset="1" stop-color="#ff1000"/></linearGradient>
<pattern id="tx" width="6" height="9" patternUnits="userSpaceOnUse" patternTransform="rotate(8)"><path d="M2 0L4.5 4.5L2 9" stroke="#e08800" stroke-width="1.4" fill="none" opacity=".55"/></pattern>
<pattern id="tx2" width="6" height="9" patternUnits="userSpaceOnUse" patternTransform="rotate(8)"><path d="M2 0L4.5 4.5L2 9" stroke="#d8b020" stroke-width="1.2" fill="none" opacity=".35"/></pattern>
</defs>
<rect x="316" y="126" width="606" height="561" fill="#000"/>
<path d="M539.5,193 L547,484 M640,187 L628,477 M748,181 L722,410" stroke="#b01818" stroke-width="1"/>
<polygon points="578,229 602,288 618,333 642,396 661,441 687,520 702,547 706,604 671,520 597,320 571,255 572,240" fill="url(#ft)"/>
<polygon points="675,486 687,520 702,547 706,604 671,520 668,512" fill="url(#fl)"/>
<polygon points="578,229 597,276 588,290 571,255 572,240" fill="#ff0800"/>
<polygon points="377,344 612,362 626,401 365,386" fill="url(#h1l)"/><polygon points="377,344 612,362 626,401 365,386" fill="url(#h1lv)"/>
<path d="M377,344 L365,386" stroke="#d8f040" stroke-width="1.6"/>
<polygon points="384,395 627,414 651,465 374,438" fill="url(#h2l)"/>
<path d="M384,395 L374,438" stroke="#70f0c0" stroke-width="1.5"/>
<polygon points="393,449 650,468 668,508 383,493" fill="url(#h3l)"/>
<path d="M393,449 L383,493" stroke="#50d0f0" stroke-width="1.5"/>
<polygon points="602,288 855,302 863,348 601,330" fill="url(#h1r)"/><polygon points="602,289 855,303 861,344 601,329" fill="url(#tx)"/><path d="M602,288.5 L855,302.5 M601,330 L863,348" stroke="#fff000" stroke-width="1.5"/>
<polygon points="618,336 842,360 852,397 620,378" fill="url(#h2r)"/><polygon points="620,350 842,365 852,397 620,378" fill="url(#tx2)"/>
<polygon points="641,396 833,412 840,453 641,439" fill="url(#h3r)"/>
<path d="M543.6,357 L544,379 M546,408 L546,432 M547,460 L547,484 M635,290 L635,308 M634,338 L634,355 M631,414 L630,426 M628.5,466 L628,477 M735,295 L734,302 M729,348 L728,354 M723,403 L722,410" stroke="#b01818" stroke-width="1"/>
<g fill="#f4f000" stroke="#c8c000" stroke-width=".5">
<polygon points="536,179 542,179 543.5,193.5 535,193.5"/>
<polygon points="637.5,172.5 643,172.5 644.5,187 636.5,187"/>
<polygon points="745,166.5 751,166.5 752.5,181 744,181"/>
</g>
<g fill="#222"><rect x="537" y="187" width="5" height="2"/><rect x="638.5" y="181" width="5" height="2"/><rect x="746" y="175" width="5" height="2"/></g>
<ellipse cx="544" cy="379" rx="5.5" ry="3.3" fill="#f0c0a0"/>
<ellipse cx="546" cy="432" rx="5.5" ry="3.3" fill="#8aa8b0"/>
<ellipse cx="547" cy="484" rx="5.5" ry="3.3" fill="#f8f080"/>
<ellipse cx="634" cy="355" rx="5.5" ry="3.3" fill="#8aa8b0"/>
<ellipse cx="630" cy="426" rx="5.5" ry="3.3" fill="#8aa8b0"/>
<ellipse cx="628" cy="477" rx="5.5" ry="3.3" fill="#f8f080"/>
<ellipse cx="635" cy="308" rx="5.5" ry="3.3" fill="#f0b8a0"/>
<ellipse cx="734" cy="302" rx="5.5" ry="3.3" fill="#f0b8a0"/>
<ellipse cx="728" cy="354" rx="5.5" ry="3.3" fill="#7aa0b0"/>
<ellipse cx="722" cy="410" rx="5.5" ry="3.3" fill="#f8f080"/>
<rect x="472" y="639" width="295" height="11" fill="url(#cb)"/>
<path d="M472,651.5 H767" stroke="#aaa" stroke-width="1"/>
<path d="M472.5,651 v3 M501.5,651 v2 M530.5,651 v3 M559.5,651 v2 M588.5,651 v3 M617.5,651 v2 M646.5,651 v3 M675.5,651 v2 M704.5,651 v3 M733.5,651 v2 M762.5,651 v3" stroke="#aaa" stroke-width="1"/>
<g font-family="Liberation Sans" font-size="8" fill="#ddd" text-anchor="middle">
<text x="619" y="636">Z Update</text>
<text x="479" y="664">-100</text><text x="533" y="664">-80</text><text x="591" y="664">-60</text><text x="648" y="664">-40</text><text x="706" y="664">-20</text><text x="763" y="664">0</text>
</g>
<g transform="translate(862,629)">
<polygon points="-16,-10 -3,-5 -5,4" fill="#18c8e8"/>
<polygon points="11,-9 4,-4 -2,-3" fill="#18c8e8"/>
<polygon points="-12,12 -5,-3 3,3" fill="#18c8e8"/>
<polygon points="14,12 -2,2 4,-3" fill="#18c8e8"/>
<polygon points="-4.5,-20 -4,-1 4,-2" fill="#28e0ff"/>
<polygon points="-4.5,-20 4,-2 1,3" fill="#18b8e0"/>
<polygon points="26,1.5 -2,-4 -2,4" fill="#28e0ff"/>
<polygon points="-28,0 -2,-4 -2,4" fill="#f4fbff"/>
<polygon points="-28,0 -2,0 -2,4" fill="#b8eaf8"/>
<polygon points="5,34 -4,3 3,1" fill="#ff6000"/>
</g>
<g font-family="Liberation Sans" font-size="9" fill="#ddd" text-anchor="middle">
<text x="856" y="607">S</text><text x="827" y="634">E</text><text x="895" y="635">W</text><text x="868" y="674">N</text>
</g>
</svg>
<div class="a" style="left:922px;top:103px;width:8px;height:584px;background:#efefef"></div>
<div class="a" style="left:925px;top:385px;width:2px;height:26px;border-left:1px dotted #b8b8b8;border-right:1px dotted #b8b8b8"></div>
<div class="a" style="left:930px;top:103px;width:348px;height:584px;background:#efefef"></div>
<div class="a" style="left:930px;top:101px;width:348px;height:21px;background:linear-gradient(#e6e6e6,#d8d8d8 16%,#dadada)"></div>
<div class="t" style="left:932px;top:104px;font-size:15.35px;line-height:17.35px;">Display Elements</div>
<svg class="a" style="left:1231px;top:107px;" width="12" height="12" viewBox="0 0 12 12"><circle cx="6" cy="6" r="4.2" fill="#e8e8e8" stroke="#9a9a9a" stroke-width=".9"/><path d="M3.8 6h4.4" stroke="#777" stroke-width="1.1"/></svg>
<div class="a" style="left:1247px;top:107px;width:14px;height:13px;border:1.6px solid #333;border-top:3px solid #333;background:#f6f6f6"></div>
<svg class="a" style="left:1263px;top:107px;" width="12" height="12" viewBox="0 0 12 12"><circle cx="6" cy="6" r="4.2" fill="#e8e8e8" stroke="#9a9a9a" stroke-width=".9"/><path d="M4.3 4.3l3.4 3.4M7.7 4.3l-3.4 3.4" stroke="#777" stroke-width="1"/></svg>
<svg class="a" style="left:935px;top:127px;" width="26" height="26" viewBox="0 0 26 26"><rect x="1" y="1" width="24" height="24" rx="5" fill="#fff" stroke="#aaa"/><path d="M5 6h3M10 6h4M16 6h5M5 10h3M10 10h4M16 10h5M5 14h3M10 14h4M16 14h5M5 18h3M10 18h4M16 18h5" stroke="#444" stroke-width="1.3"/></svg>
<div class="a" style="left:965px;top:125px;width:32px;height:31px;background:#dadada;border:1px solid #cdcdcd;border-radius:2px"></div>
<svg class="a" style="left:967px;top:127px;" width="28" height="28" viewBox="0 0 28 28"><path d="M2 16C5 10 8 5 11 5L26 10C22 12 19 15 15 18C11 15 7 13 2 16Z" fill="#40acf4" stroke="#0a4a90" stroke-width=".6"/><path d="M2 16C7 13 11 15 15 18C19 15 22 12 26 10V15C22 17 19 20 15 23C11 20 7 18 2 20Z" fill="#0a3a80"/></svg>
<svg class="a" style="left:999px;top:127px;" width="28" height="28" viewBox="0 0 28 28"><path d="M2 16C5 10 8 5 11 5L26 10C22 12 19 15 15 18C11 15 7 13 2 16Z" fill="#d4d4d4" stroke="#444" stroke-width=".6"/><path d="M2 16C7 13 11 15 15 18C19 15 22 12 26 10V15C22 17 19 20 15 23C11 20 7 18 2 20Z" fill="#555"/></svg>
<svg class="a" style="left:1035px;top:127px;" width="25" height="27" viewBox="0 0 25 27"><defs><linearGradient id="cmt" x1="0" y1="0" x2="0" y2="1"><stop offset="0" stop-color="#ff2000"/><stop offset=".45" stop-color="#f8f000"/><stop offset=".8" stop-color="#10b040"/><stop offset="1" stop-color="#2020a0"/></linearGradient></defs><path d="M1 1l23 3-3 22H4z" fill="url(#cmt)" stroke="#222" stroke-width="1"/></svg>
<svg class="a" style="left:1067px;top:127px;" width="26" height="26" viewBox="0 0 26 26"><rect x="1" y="1" width="12" height="10" fill="#fff" stroke="#888"/><rect x="1" y="1" width="12" height="3" fill="#3a90d8"/><rect x="3" y="11" width="4" height="14" fill="#e0a030"/><rect x="8" y="15" width="4" height="10" fill="#e02020"/><rect x="13" y="18" width="4" height="7" fill="#e08060"/><rect x="10" y="4" width="15" height="14" fill="#f0e040" stroke="#333" stroke-width=".8"/><path d="M12 7h11M12 10h11M12 13h11M12 16h11" stroke="#30a050" stroke-width="1.2"/></svg>
<div class="a" style="left:930px;top:158px;width:347px;height:23px;background:#abcfea;border-top:1px solid #b4c2cc;border-bottom:1px solid #b0c4d4"></div>
<svg class="a" style="left:937px;top:162px;" width="14" height="16" viewBox="0 0 14 16"><path d="M1.5 1h7l4 4v10h-11z" fill="#f8efd8" stroke="#888"/><path d="M8.5 1v4h4" fill="none" stroke="#888"/></svg>
<svg class="a" style="left:957px;top:166px;" width="10" height="7" viewBox="0 0 10 7"><path d="M1 1h8l-4 5z" fill="#3a4652"/></svg>
<svg class="a" style="left:973px;top:161px;" width="17" height="17" viewBox="0 0 17 17"><rect x="0.5" y="0.5" width="16" height="16" rx="2" fill="#fff" stroke="#bbb"/><path d="M2.5 6h5M2.5 9h5M2.5 12h5" stroke="#aaa"/><text x="11" y="14" text-anchor="middle" font-family="Liberation Sans" font-weight="bold" font-size="14" fill="#e01010">?</text><path d="M2.5 9h5" stroke="#e01010" stroke-width="1.5"/></svg>
<svg class="a" style="left:1060px;top:160px;" width="20" height="20" viewBox="0 0 20 20"><g transform="scale(.72)"><path d="M2 16C5 10 8 5 11 5L26 10C22 12 19 15 15 18C11 15 7 13 2 16Z" fill="#40acf4" stroke="#0a4a90" stroke-width=".6"/><path d="M2 16C7 13 11 15 15 18C19 15 22 12 26 10V15C22 17 19 20 15 23C11 20 7 18 2 20Z" fill="#0a3a80"/></g></svg>
<div class="t" style="left:1086px;top:160px;font-size:16px;line-height:18px;color:#1156a8">Objects</div>
<svg class="a" style="left:1213px;top:163px;" width="14" height="12" viewBox="0 0 14 12"><rect x="0" y="2" width="14" height="8" fill="#d8ecf8"/><path d="M11 2H3l4 4-4 4h8" stroke="#222" stroke-width="1.1" fill="none"/></svg>
<svg class="a" style="left:1235px;top:160px;" width="18" height="18" viewBox="0 0 18 18"><ellipse cx="9" cy="5" rx="8" ry="4" fill="#6a6a6a"/><path d="M1 5l6 6v6h4v-6l6-6" fill="#6a6a6a"/></svg>
<svg class="a" style="left:1262px;top:164px;" width="12" height="12" viewBox="0 0 12 12"><circle cx="6" cy="6" r="4.8" fill="#dfe8ef" stroke="#8c969e"/><path d="M4 4l4 4M8 4l-4 4" stroke="#66707a" stroke-width="1"/></svg>
<div class="a" style="left:930px;top:181px;width:331px;height:490px;background:#fff;border-left:1px solid #a8a8a8"></div>
<div class="a" style="left:931px;top:181px;width:330px;height:19px;background:#efefef;border-bottom:2px solid #b4b4b4"></div>
<div class="t" style="left:1092px;top:187px;font-size:8px;line-height:10px;color:#333">Name</div>
<svg class="a" style="left:1023px;top:204px;" width="16" height="16" viewBox="0 0 16 16"><circle cx="8" cy="8" r="7.3" fill="#fff" stroke="#c8c8c8"/></svg>
<svg class="a" style="left:1044px;top:202px;" width="22" height="22" viewBox="0 0 22 22"><path d="M1 2h17" stroke="#111" stroke-width="1.4"/><path d="M14 0l5 2-5 2z" fill="#111"/><path d="M3 6l6 14h1.5l6-14" stroke="#111" stroke-width="2.6" fill="none"/></svg>
<div class="t" style="left:1069px;top:204px;font-size:15.35px;line-height:17.35px;">Average Velocity*</div>
<svg class="a" style="left:1023px;top:228px;" width="16" height="16" viewBox="0 0 16 16"><circle cx="8" cy="8" r="7.3" fill="#fff" stroke="#c8c8c8"/></svg>
<svg class="a" style="left:1044px;top:226px;" width="22" height="22" viewBox="0 0 22 22"><path d="M1 2h17" stroke="#111" stroke-width="1.4"/><path d="M14 0l5 2-5 2z" fill="#111"/><path d="M3 6l6 14h1.5l6-14" stroke="#111" stroke-width="2.6" fill="none"/></svg>
<div class="t" style="left:1069px;top:227px;font-size:15.35px;line-height:17.35px;">Average Velocity*</div>
<svg class="a" style="left:1023px;top:252px;" width="16" height="16" viewBox="0 0 16 16"><circle cx="8" cy="8" r="7.3" fill="#fff" stroke="#c8c8c8"/></svg>
<svg class="a" style="left:1042px;top:249px;" width="24" height="22" viewBox="0 0 24 22"><text x="1" y="13" font-family="Liberation Sans" font-size="16" fill="#111">&#952;</text><path d="M1 20.5h21M2 20.5L18 5" stroke="#111" stroke-width="1.4"/><path d="M13 10.5c2 2 3 6 3 10" stroke="#e01010" stroke-width="1.6" fill="none"/></svg>
<div class="t" style="left:1069px;top:251px;font-size:15.35px;line-height:17.35px;">Azimuth*</div>
<svg class="a" style="left:1023px;top:276px;" width="16" height="16" viewBox="0 0 16 16"><circle cx="8" cy="8" r="7.3" fill="#fff" stroke="#c8c8c8"/></svg>
<svg class="a" style="left:1042px;top:273px;" width="24" height="22" viewBox="0 0 24 22"><text x="1" y="13" font-family="Liberation Sans" font-size="16" fill="#111">&#952;</text><path d="M1 20.5h21M2 20.5L18 5" stroke="#111" stroke-width="1.4"/><path d="M13 10.5c2 2 3 6 3 10" stroke="#e01010" stroke-width="1.6" fill="none"/></svg>
<div class="t" style="left:1069px;top:275px;font-size:15.35px;line-height:17.35px;">Dip*</div>
<svg class="a" style="left:1023px;top:299px;" width="16" height="16" viewBox="0 0 16 16"><circle cx="8" cy="8" r="7.3" fill="#fff" stroke="#c8c8c8"/></svg>
<svg class="a" style="left:1044px;top:297px;" width="21" height="21" viewBox="0 0 21 21"><rect x="0.5" y="0.5" width="20" height="20" fill="#333"/><rect x="1.5" y="1.5" width="8.5" height="8.5" fill="#20b048"/><rect x="11" y="1.5" width="8.5" height="8.5" fill="#e01828"/><rect x="1.5" y="11" width="8.5" height="8.5" fill="#f8d070"/><rect x="11" y="11" width="8.5" height="8.5" fill="#58b8e8"/></svg>
<div class="t" style="left:1069px;top:299px;font-size:15.35px;line-height:17.35px;">Formation Bottom Tag*</div>
<svg class="a" style="left:1023px;top:323px;" width="16" height="16" viewBox="0 0 16 16"><circle cx="8" cy="8" r="7.3" fill="#fff" stroke="#c8c8c8"/></svg>
<svg class="a" style="left:1044px;top:321px;" width="22" height="22" viewBox="0 0 22 22"><path d="M1 2h17" stroke="#111" stroke-width="1.4"/><path d="M14 0l5 2-5 2z" fill="#111"/><path d="M2 6l5.5 14h1.5l5.5-14" stroke="#111" stroke-width="2.4" fill="none"/><path d="M19 11v10" stroke="#111" stroke-width="2"/><rect x="18" y="7.5" width="2" height="2" fill="#111"/></svg>
<div class="t" style="left:1069px;top:323px;font-size:15.35px;line-height:17.35px;">Interval Velocity*</div>
<svg class="a" style="left:1023px;top:347px;" width="16" height="16" viewBox="0 0 16 16"><circle cx="8" cy="8" r="7.3" fill="#fff" stroke="#c8c8c8"/></svg>
<div class="t" style="left:1043px;top:343px;font-size:22px;line-height:24px;letter-spacing:-0.5px;-webkit-text-stroke:0.5px #111;color:#111">IR</div>
<div class="t" style="left:1069px;top:347px;font-size:15.35px;line-height:17.35px;">Mis-Tie (Depth Perturbation)</div>
<svg class="a" style="left:1023px;top:371px;" width="16" height="16" viewBox="0 0 16 16"><circle cx="8" cy="8" r="7.3" fill="#fff" stroke="#c8c8c8"/></svg>
<div class="t" style="left:1043px;top:367px;font-size:22px;line-height:24px;letter-spacing:-0.5px;-webkit-text-stroke:0.5px #111;color:#111">IR</div>
<div class="t" style="left:1069px;top:370px;font-size:15.35px;line-height:17.35px;">Vertical Axis Scaled*</div>
<svg class="a" style="left:1023px;top:395px;" width="16" height="16" viewBox="0 0 16 16"><circle cx="8" cy="8" r="7.3" fill="#fff" stroke="#c8c8c8"/></svg>
<div class="t" style="left:1047px;top:389px;font-size:20px;line-height:22px;-webkit-text-stroke:0.4px #111;color:#111">X</div>
<svg class="a" style="left:1045px;top:409px;" width="20" height="7" viewBox="0 0 20 7"><path d="M3 3.5h14" stroke="#c01010" stroke-width="1.3"/><path d="M0 3.5l4-3v6zM20 3.5l-4-3v6z" fill="#c01010"/></svg>
<div class="t" style="left:1069px;top:394px;font-size:15.35px;line-height:17.35px;">X</div>
<svg class="a" style="left:1023px;top:419px;" width="16" height="16" viewBox="0 0 16 16"><circle cx="8" cy="8" r="7.3" fill="#fff" stroke="#c8c8c8"/></svg>
<div class="t" style="left:1043px;top:415px;font-size:22px;line-height:24px;letter-spacing:-0.5px;-webkit-text-stroke:0.5px #111;color:#111">IR</div>
<div class="t" style="left:1069px;top:418px;font-size:15.35px;line-height:17.35px;">X Update*</div>
<svg class="a" style="left:1023px;top:442px;" width="16" height="16" viewBox="0 0 16 16"><circle cx="8" cy="8" r="7.3" fill="#fff" stroke="#c8c8c8"/></svg>
<div class="t" style="left:1043px;top:438px;font-size:22px;line-height:24px;letter-spacing:-0.5px;-webkit-text-stroke:0.5px #111;color:#111">IR</div>
<div class="t" style="left:1069px;top:442px;font-size:15.35px;line-height:17.35px;">X Update*</div>
<svg class="a" style="left:1023px;top:466px;" width="16" height="16" viewBox="0 0 16 16"><circle cx="8" cy="8" r="7.3" fill="#fff" stroke="#c8c8c8"/></svg>
<div class="t" style="left:1047px;top:460px;font-size:20px;line-height:22px;-webkit-text-stroke:0.4px #111;color:#111">Y</div>
<svg class="a" style="left:1045px;top:480px;" width="20" height="7" viewBox="0 0 20 7"><path d="M3 3.5h14" stroke="#c01010" stroke-width="1.3"/><path d="M0 3.5l4-3v6zM20 3.5l-4-3v6z" fill="#c01010"/></svg>
<div class="t" style="left:1069px;top:466px;font-size:15.35px;line-height:17.35px;">Y</div>
<svg class="a" style="left:1023px;top:490px;" width="16" height="16" viewBox="0 0 16 16"><circle cx="8" cy="8" r="7.3" fill="#fff" stroke="#c8c8c8"/></svg>
<div class="t" style="left:1043px;top:486px;font-size:22px;line-height:24px;letter-spacing:-0.5px;-webkit-text-stroke:0.5px #111;color:#111">IR</div>
<div class="t" style="left:1069px;top:490px;font-size:15.35px;line-height:17.35px;">Y Update*</div>
<svg class="a" style="left:1023px;top:514px;" width="16" height="16" viewBox="0 0 16 16"><circle cx="8" cy="8" r="7.3" fill="#fff" stroke="#c8c8c8"/></svg>
<div class="t" style="left:1043px;top:510px;font-size:22px;line-height:24px;letter-spacing:-0.5px;-webkit-text-stroke:0.5px #111;color:#111">IR</div>
<div class="t" style="left:1069px;top:514px;font-size:15.35px;line-height:17.35px;">Y Update*</div>
<svg class="a" style="left:1023px;top:538px;" width="16" height="16" viewBox="0 0 16 16"><circle cx="8" cy="8" r="7.3" fill="#fff" stroke="#c8c8c8"/></svg>
<svg class="a" style="left:1044px;top:536px;" width="8" height="22" viewBox="0 0 8 22"><path d="M3 1v16" stroke="#c01010" stroke-width="1.4"/><path d="M0 15l3 5 3-5z" fill="#c01010"/></svg>
<div class="t" style="left:1050px;top:534px;font-size:22px;line-height:24px;-webkit-text-stroke:0.5px #111;color:#111">D</div>
<div class="t" style="left:1069px;top:537px;font-size:15.35px;line-height:17.35px;">Z</div>
<div class="a" style="left:931px;top:558px;width:330px;height:23px;background:linear-gradient(#dcecf9,#b4d6ee)"></div>
<svg class="a" style="left:1023px;top:562px;" width="16" height="16" viewBox="0 0 16 16"><circle cx="8" cy="8" r="7.3" fill="#fff" stroke="#c4c4c4"/><circle cx="8" cy="8" r="3.6" fill="#444"/></svg>
<div class="t" style="left:1043px;top:558px;font-size:22px;line-height:24px;letter-spacing:-0.5px;-webkit-text-stroke:0.5px #111;color:#111">IR</div>
<div class="t" style="left:1069px;top:561px;font-size:15.35px;line-height:17.35px;">Z Update*</div>
<svg class="a" style="left:1023px;top:586px;" width="16" height="16" viewBox="0 0 16 16"><circle cx="8" cy="8" r="7.3" fill="#fff" stroke="#c8c8c8"/></svg>
<div class="t" style="left:1043px;top:582px;font-size:22px;line-height:24px;letter-spacing:-0.5px;-webkit-text-stroke:0.5px #111;color:#111">IR</div>
<div class="t" style="left:1069px;top:585px;font-size:15.35px;line-height:17.35px;">Z Update*</div>
<svg class="a" style="left:1023px;top:609px;" width="16" height="16" viewBox="0 0 16 16"><circle cx="8" cy="8" r="7.3" fill="#fff" stroke="#c8c8c8"/></svg>
<svg class="a" style="left:1044px;top:607px;" width="21" height="21" viewBox="0 0 21 21"><rect x="0.5" y="0.5" width="20" height="20" fill="#333"/><rect x="1.5" y="1.5" width="8.5" height="8.5" fill="#20b048"/><rect x="11" y="1.5" width="8.5" height="8.5" fill="#e01828"/><rect x="1.5" y="11" width="8.5" height="8.5" fill="#f8d070"/><rect x="11" y="11" width="8.5" height="8.5" fill="#58b8e8"/></svg>
<div class="t" style="left:1069px;top:609px;font-size:15.35px;line-height:17.35px;">boundaries*</div>
<svg class="a" style="left:1002px;top:631px;" width="21" height="21" viewBox="0 0 21 21"><defs><linearGradient id="fgr" x1="0" y1="0" x2="0" y2="1"><stop offset="0" stop-color="#e02010"/><stop offset=".5" stop-color="#f8d800"/><stop offset="1" stop-color="#20a040"/></linearGradient></defs><rect x="1" y="1" width="11" height="11" fill="url(#fgr)" stroke="#222" stroke-width=".8"/><rect x="5" y="4" width="11" height="11" fill="url(#fgr)" stroke="#222" stroke-width=".8"/><path d="M9 8h11l-2 12H10z" fill="url(#fgr)" stroke="#222" stroke-width=".8"/></svg>
<div class="t" style="left:1027px;top:633px;font-size:15.35px;line-height:17.35px;">edge property groups*</div>
<svg class="a" style="left:1002px;top:655px;" width="21" height="21" viewBox="0 0 21 21"><defs><linearGradient id="fgr" x1="0" y1="0" x2="0" y2="1"><stop offset="0" stop-color="#e02010"/><stop offset=".5" stop-color="#f8d800"/><stop offset="1" stop-color="#20a040"/></linearGradient></defs><rect x="1" y="1" width="11" height="11" fill="url(#fgr)" stroke="#222" stroke-width=".8"/><rect x="5" y="4" width="11" height="11" fill="url(#fgr)" stroke="#222" stroke-width=".8"/><path d="M9 8h11l-2 12H10z" fill="url(#fgr)" stroke="#222" stroke-width=".8"/></svg>
<div class="t" style="left:1027px;top:657px;font-size:15.35px;line-height:17.35px;">node property groups*</div>
<div class="a" style="left:1261px;top:181px;width:16px;height:490px;background:#e4e4e4;border-left:1px solid #d8d8d8"></div>
<div class="a" style="left:1261px;top:197px;width:16px;height:320px;background:linear-gradient(90deg,#fbfbfb,#f0f0f0);border:1px solid #dcdcdc"></div>
<div class="a" style="left:1261px;top:181px;width:16px;height:16px;background:#fafafa;border:1px solid #dcdcdc"></div>
<svg class="a" style="left:1263px;top:185px;" width="12" height="8" viewBox="0 0 12 8"><path d="M1 7h10L6 1z" fill="#555"/></svg>
<div class="a" style="left:1261px;top:655px;width:16px;height:16px;background:#fafafa;border:1px solid #dcdcdc"></div>
<svg class="a" style="left:1263px;top:659px;" width="12" height="8" viewBox="0 0 12 8"><path d="M1 1h10L6 7z" fill="#555"/></svg>
<div class="a" style="left:931px;top:670px;width:346px;height:17px;background:#efefef;border-top:1px solid #d8d8d8;border-bottom:1px solid #a8a8a8"></div>
<div class="a" style="left:931px;top:671px;width:16px;height:15px;background:#f8f8f8;border-right:1px solid #dcdcdc"></div>
<svg class="a" style="left:934px;top:674px;" width="8" height="10" viewBox="0 0 8 10"><path d="M7 1v8L1 5z" fill="#555"/></svg>
<div class="a" style="left:947px;top:671px;width:215px;height:15px;background:linear-gradient(#fdfdfd,#f0f0f0);border:1px solid #dcdcdc"></div>
<div class="a" style="left:1162px;top:671px;width:82px;height:15px;background:#e2e2e2"></div>
<div class="a" style="left:1244px;top:671px;width:17px;height:15px;background:#f8f8f8;border-left:1px solid #dcdcdc"></div>
<svg class="a" style="left:1249px;top:674px;" width="8" height="10" viewBox="0 0 8 10"><path d="M1 1v8l6-4z" fill="#555"/></svg>
<div class="a" style="left:1261px;top:671px;width:16px;height:15px;background:#efefef;border-left:1px solid #d8d8d8"></div>
<div class="a" style="left:1277px;top:103px;width:1px;height:584px;background:#b8b8b8"></div>
<div class="a" style="left:1278px;top:103px;width:38px;height:584px;background:#f3f3f3"></div>
<div class="a" style="left:1291px;top:112px;width:12px;height:2px;border-top:1px dotted #c8c8c8;border-bottom:1px dotted #c8c8c8"></div>
<div class="a" style="left:1291px;top:240px;width:12px;height:2px;border-top:1px dotted #c8c8c8;border-bottom:1px dotted #c8c8c8"></div>
<div class="a" style="left:1291px;top:530px;width:12px;height:2px;border-top:1px dotted #c8c8c8;border-bottom:1px dotted #c8c8c8"></div>
<div class="a" style="left:1291px;top:630px;width:12px;height:2px;border-top:1px dotted #c8c8c8;border-bottom:1px dotted #c8c8c8"></div>
<svg class="a" style="left:1284px;top:120px;" width="30" height="28" viewBox="0 0 30 28"><path d="M3 6l14 5-6 2 6 6-3 3-6-6-2 6z" fill="#f8d040" stroke="#8a6a10" stroke-width="1"/><circle cx="22" cy="7" r="6.5" fill="#3a80d0"/><rect x="21" y="6" width="2" height="6" fill="#fff"/><rect x="21" y="2.5" width="2" height="2" fill="#fff"/></svg>
<svg class="a" style="left:1283px;top:151px;" width="30" height="30" viewBox="0 0 30 30"><path d="M4 18c-2-2 0-4 3-2l4 3-3-11c-1-2 2-3 3-1l3 8-1-10c0-2 3-2 3 0l2 9 1-8c0-2 3-2 3 0l1 9 2-6c1-2 3-1 3 1l-1 9c-1 5-4 8-9 8-4 0-6-2-9-6z" fill="#f6d8a0" stroke="#5a4020" stroke-width="1"/></svg>
<svg class="a" style="left:1283px;top:185px;" width="30" height="28" viewBox="0 0 30 28"><path d="M2 20L20 2l6 6L8 26z" fill="#f8e020" stroke="#6a5a10" stroke-width="1"/><path d="M6 18l2 2M9 15l3 3M12 12l2 2M15 9l3 3M18 6l2 2" stroke="#6a5a10" stroke-width="1"/></svg>
<svg class="a" style="left:1292px;top:216px;" width="12" height="8" viewBox="0 0 12 8"><path d="M1 1h10L6 7z" fill="#555"/></svg>
<svg class="a" style="left:1284px;top:248px;" width="28" height="28" viewBox="0 0 28 28"><rect x="1" y="1" width="26" height="26" fill="#e8f0f8" stroke="#5a8ad0"/><rect x="1" y="1" width="26" height="3" fill="#3a7ad8"/><rect x="23" y="1" width="4" height="3" fill="#e02040"/><path d="M5 8l5 5M5 8v4M5 8h4M23 8l-5 5M23 8v4M23 8h-4M5 24l5-5M5 24v-4M5 24h4M23 24l-5-5M23 24v-4M23 24h-4" stroke="#20c020" stroke-width="1.6" fill="none"/></svg>
<div class="a" style="left:1284px;top:281px;width:22px;height:22px;background:#b8dcf8;border:1px solid #80b8e8"></div>
<svg class="a" style="left:1284px;top:280px;" width="30" height="30" viewBox="0 0 30 30"><circle cx="11" cy="11" r="9" fill="#dbeaf8" stroke="#3a3a3a" stroke-width="1.6"/><path d="M17.5 17.5l7 7" stroke="#7a1010" stroke-width="3"/></svg>
<svg class="a" style="left:1284px;top:313px;" width="28" height="28" viewBox="0 0 28 28"><circle cx="14" cy="4" r="2.5" fill="none" stroke="#c09010" stroke-width="2"/><path d="M14 7v18M8 10h12M3 15c0 6 5 10 11 10s11-4 11-10" stroke="#f0c020" stroke-width="3" fill="none"/><path d="M1 16l3-4 3 4zM21 16l3-4 3 4z" fill="#f0c020"/></svg>
<svg class="a" style="left:1284px;top:345px;" width="28" height="28" viewBox="0 0 28 28"><path d="M3 14L14 3l11 11" stroke="#f06020" stroke-width="2.4" fill="none"/><path d="M6 13v12h16V13" fill="#fff" stroke="#555" stroke-width="1"/><rect x="11" y="16" width="6" height="9" rx="2" fill="#f8b050"/><path d="M5 5v5" stroke="#333" stroke-width="1.5"/><path d="M26 2l-7 7M19 4v5h5" stroke="#20c020" stroke-width="1.8" fill="none"/></svg>
<svg class="a" style="left:1284px;top:379px;" width="28" height="28" viewBox="0 0 28 28"><path d="M3 14L14 3l11 11" stroke="#f06020" stroke-width="2.4" fill="none"/><path d="M6 13v12h16V13" fill="#fff" stroke="#555" stroke-width="1"/><rect x="11" y="16" width="6" height="9" rx="2" fill="#f8b050"/><path d="M5 5v5" stroke="#333" stroke-width="1.5"/></svg>
<svg class="a" style="left:1284px;top:412px;" width="28" height="24" viewBox="0 0 28 24"><path d="M5 1h18l4 10H1z" fill="#f00"/><path d="M1 11h26v10H1zM1 11l4 10M27 11l-4 10M5 21h18" stroke="#111" stroke-width="1.5" fill="none"/><path d="M5 1h18l4 10H1z" stroke="#111" stroke-width="1.2" fill="none"/></svg>
<svg class="a" style="left:1284px;top:444px;" width="28" height="24" viewBox="0 0 28 24"><path d="M5 1h18l4 10H1zM1 11v10h26V11M5 1v10M23 1v10" stroke="#111" stroke-width="1.5" fill="none"/><rect x="1" y="11" width="26" height="10" fill="#f00" stroke="#111" stroke-width="1.2"/></svg>
<svg class="a" style="left:1292px;top:475px;" width="12" height="8" viewBox="0 0 12 8"><path d="M1 1h10L6 7z" fill="#555"/></svg>
<svg class="a" style="left:1284px;top:488px;" width="28" height="28" viewBox="0 0 28 28"><circle cx="14" cy="14" r="12.5" fill="#fff" stroke="#222" stroke-width="1.3"/><path d="M4 16c6 4 15 4 21 0" stroke="#2030e0" stroke-width="1.6" fill="none"/><path d="M8 8c4-4 10-4 14 1 2 4 2 10 0 14" stroke="#20a040" stroke-width="1.4" fill="none"/><path d="M18 3c-6 4-9 12-8 22" stroke="#e02020" stroke-width="1.4" fill="none"/></svg>
<svg class="a" style="left:1283px;top:540px;" width="30" height="25" viewBox="0 0 30 25"><rect x="1" y="4" width="28" height="20" rx="3" fill="#a8a8a8"/><rect x="4" y="1" width="6" height="4" fill="#888"/><circle cx="15" cy="14" r="7" fill="#fff"/><circle cx="15" cy="14" r="6" fill="none" stroke="url(#rb)" stroke-width="3"/><defs><linearGradient id="rb"><stop offset="0" stop-color="#f00"/><stop offset=".3" stop-color="#f8e000"/><stop offset=".6" stop-color="#20c040"/><stop offset="1" stop-color="#2040f0"/></linearGradient></defs><circle cx="25" cy="8" r="1.6" fill="#fff"/></svg>
<svg class="a" style="left:1292px;top:572px;" width="12" height="8" viewBox="0 0 12 8"><path d="M1 1h10L6 7z" fill="#555"/></svg>
<div class="a" style="left:1285px;top:586px;width:25px;height:1px;background:#dedede"></div>
<svg class="a" style="left:1292px;top:604px;" width="12" height="13" viewBox="0 0 12 13"><path d="M1 1l5 4 5-4M1 7l5 4 5-4" stroke="#333" stroke-width="1.6" fill="none"/></svg>
<svg class="a" style="left:1284px;top:639px;" width="28" height="26" viewBox="0 0 28 26"><path d="M2 7l12-5 12 4-2 16H5z" fill="#fff" stroke="#222" stroke-width="1.3"/><path d="M8 10l12 0 2 12H6z" fill="#c8c8c8" stroke="#222" stroke-width="1"/><path d="M2 7l6 3M26 6l-6 4M14 2v0" stroke="#222" stroke-width="1"/></svg>
<svg class="a" style="left:1292px;top:672px;" width="12" height="13" viewBox="0 0 12 13"><path d="M1 1l5 4 5-4M1 7l5 4 5-4" stroke="#333" stroke-width="1.6" fill="none"/></svg>
<div class="a" style="left:0px;top:687px;width:1316px;height:39px;background:#efefef;border-top:1px solid #e6e6e6"></div>
<div class="a" style="left:0px;top:726px;width:1316px;height:1px;background:#d4d4d4"></div>
<div class="a" style="left:7px;top:702px;width:3px;height:11px;border-left:1px dotted #c8c8c8;border-right:1px dotted #c8c8c8"></div>
<svg class="a" style="left:16px;top:693px;" width="30" height="30" viewBox="0 0 30 30"><rect x="1" y="1" width="26" height="22" fill="#fff" stroke="#999"/><path d="M10 5h14M10 9h14M10 13h14M10 17h14" stroke="#aaa"/><path d="M4 9h3M4 13h3M4 17h3" stroke="#e03030" stroke-width="1.4"/><path d="M4 13h3" stroke="#20b030" stroke-width="1.4"/><path d="M4 3l12 14" stroke="#667" stroke-width="2"/><path d="M15 16l4-3 9 10-4 4z" fill="#f0b020" stroke="#8a6010" stroke-width=".8"/></svg>
<svg class="a" style="left:47px;top:692px;" width="32" height="32" viewBox="0 0 32 32"><path d="M28 2L16 18l-3-3z" fill="#f08020" stroke="#905010" stroke-width=".8"/><path d="M13 15l3 3c-2 5-6 6-11 6 2-2 2-7 8-9z" fill="#f0c050" stroke="#806020" stroke-width=".8"/><rect x="1.5" y="26" width="29" height="3" rx="1" fill="#ddd" stroke="#666" stroke-width="1"/></svg>
<div class="a" style="left:80px;top:693px;width:84px;height:28px;background:linear-gradient(#f8f8f8,#ececec);border:1px solid #d2d2d2;border-radius:3px"></div>
<div class="a" style="left:86px;top:705px;width:18px;height:1px;background:#555"></div>
<div class="t" style="left:108px;top:700px;font-size:15.35px;line-height:17.35px;">1 pt</div>
<svg class="a" style="left:146px;top:703px;" width="11" height="7" viewBox="0 0 11 7"><path d="M1 1h9L5.5 6z" fill="#555"/></svg>
<div class="a" style="left:165px;top:696px;width:65px;height:23px;background:linear-gradient(#f8f8f8,#ececec);border:1px solid #d2d2d2;border-radius:2px"></div>
<div class="a" style="left:166px;top:697px;width:42px;height:21px;overflow:hidden"><div class="t" style="left:1px;top:3px;font-size:15.35px;line-height:17px">points</div></div>
<svg class="a" style="left:212px;top:704px;" width="11" height="7" viewBox="0 0 11 7"><path d="M1 1h9L5.5 6z" fill="#555"/></svg>
<div class="a" style="left:241px;top:702px;width:3px;height:11px;border-left:1px dotted #c8c8c8;border-right:1px dotted #c8c8c8"></div>
<div class="t" style="left:249px;top:699px;font-size:15.35px;line-height:17.35px;">Colormap</div>
<div class="a" style="left:322px;top:695px;width:91px;height:23px;background:#fff;border:1px solid #d2d2d2;border-radius:2px"></div>
<div class="a" style="left:390px;top:696px;width:22px;height:21px;background:#e9e9e9"></div>
<svg class="a" style="left:324px;top:702px;" width="23" height="9" viewBox="0 0 23 9"><defs><linearGradient id="mcm"><stop offset="0" stop-color="#0000f0"/><stop offset=".35" stop-color="#00e0f0"/><stop offset=".6" stop-color="#e0e020"/><stop offset="1" stop-color="#f00000"/></linearGradient></defs><rect x="0" y="0" width="23" height="9" fill="url(#mcm)"/></svg>
<div class="a" style="left:347px;top:697px;width:43px;height:20px;overflow:hidden"><div class="t" style="left:-1px;top:2px;font-size:15.35px;line-height:17px">.ndard</div></div>
<svg class="a" style="left:394px;top:704px;" width="11" height="7" viewBox="0 0 11 7"><path d="M1 1h9L5.5 6z" fill="#555"/></svg>
<svg class="a" style="left:419px;top:693px;" width="26" height="29" viewBox="0 0 26 29"><defs><linearGradient id="vrb" x1="0" y1="0" x2="0" y2="1"><stop offset="0" stop-color="#c00000"/><stop offset=".3" stop-color="#f0e000"/><stop offset=".55" stop-color="#20c020"/><stop offset=".8" stop-color="#20a0e0"/><stop offset="1" stop-color="#2020d0"/></linearGradient></defs><rect x="1" y="1" width="7" height="27" fill="url(#vrb)"/><path d="M10 24l2-5 10-11 3 3-11 10z" fill="#f0a040" stroke="#a06020" stroke-width=".6"/><path d="M10 24l2-5 3 2z" fill="#333"/></svg>
<div class="a" style="left:447px;top:694px;width:54px;height:26px;background:#fff;border:1px solid #d6d6d6;border-radius:2px"></div>
<div class="t" style="left:449px;top:699px;font-size:15.35px;line-height:17.35px;">256</div>
<div class="a" style="left:502px;top:694px;width:91px;height:26px;background:#fff;border:1px solid #d6d6d6;border-radius:2px"></div>
<div class="t" style="left:504px;top:699px;font-size:15.35px;line-height:17.35px;">-100.818</div>
<div class="a" style="left:594px;top:693px;width:72px;height:28px;background:linear-gradient(90deg,#0000f8,#00f0f8 30%,#a0f8a0 48%,#f8f800 70%,#ff0000);border:1px solid #ddd"></div>
<div class="a" style="left:668px;top:694px;width:92px;height:26px;background:#fff;border:1px solid #d6d6d6;border-radius:2px"></div>
<div class="t" style="left:670px;top:699px;font-size:15.35px;line-height:17.35px;">1.25351</div>
<svg class="a" style="left:764px;top:693px;" width="28" height="29" viewBox="0 0 28 29"><rect x="1" y="1" width="4" height="26" fill="url(#vrb)"/><path d="M10 12a7 7 0 0 1 12-4" stroke="#20b030" stroke-width="2.4" fill="none"/><path d="M20 4l3 6-6 0z" fill="#20b030"/><path d="M24 16a7 7 0 0 1-12 4" stroke="#e07a20" stroke-width="2.4" fill="none"/><path d="M14 24l-3-6 6 0z" fill="#e07a20"/></svg>
<div class="a" style="left:797px;top:698px;width:1px;height:20px;background:#dcdcdc"></div>
<svg class="a" style="left:806px;top:695px;" width="25" height="25" viewBox="0 0 25 25"><defs><linearGradient id="rbh"><stop offset="0" stop-color="#2020e0"/><stop offset=".3" stop-color="#20c020"/><stop offset=".6" stop-color="#f0e000"/><stop offset="1" stop-color="#e00000"/></linearGradient></defs><rect x=".5" y=".5" width="24" height="24" fill="#000"/><path d="M3 24c2-8 5-20 11-22h8v22z" fill="url(#rbh)"/></svg>
<svg class="a" style="left:839px;top:695px;" width="25" height="25" viewBox="0 0 25 25"><defs><linearGradient id="rbh2"><stop offset="0" stop-color="#2020e0"/><stop offset=".35" stop-color="#20c020"/><stop offset=".6" stop-color="#f0e000"/><stop offset="1" stop-color="#e00000"/></linearGradient></defs><rect x=".5" y=".5" width="24" height="24" fill="#000"/><path d="M3 2h8c6 2 9 14 11 22H3z" fill="url(#rbh2)"/></svg>
<div class="a" style="left:871px;top:698px;width:1px;height:20px;background:#dcdcdc"></div>
<div class="a" style="left:877px;top:692px;width:31px;height:30px;background:#d8d8d8;border:1px solid #c8c8c8;border-bottom:2px solid #111"></div>
<svg class="a" style="left:880px;top:694px;" width="26" height="26" viewBox="0 0 26 26"><circle cx="12" cy="13" r="8" stroke="#e01010" stroke-width="2.6" fill="none"/><path d="M4 24L21 2" stroke="#e01010" stroke-width="2.6"/></svg>
<div class="a" style="left:908px;top:692px;width:14px;height:30px;background:#d4d4d4;border:1px solid #c8c8c8;border-bottom:2px solid #111"></div>
<svg class="a" style="left:910px;top:704px;" width="10" height="7" viewBox="0 0 10 7"><path d="M1 1h8L5 6z" fill="#444"/></svg>
<div class="a" style="left:923px;top:693px;width:51px;height:27px;background:#fff;border:1px solid #d6d6d6;border-radius:2px"></div>
<div class="a" style="left:958px;top:694px;width:15px;height:25px;background:#f4f4f4;border-left:1px solid #dcdcdc"></div>
<div class="t" style="left:925px;top:699px;font-size:15.35px;line-height:17.35px;">1.0</div>
<svg class="a" style="left:960px;top:699px;" width="11" height="5" viewBox="0 0 11 5"><path d="M1 5h9L5.5 0z" fill="#aaa"/></svg>
<svg class="a" style="left:960px;top:709px;" width="11" height="5" viewBox="0 0 11 5"><path d="M1 0h9L5.5 5z" fill="#555"/></svg>
<div class="a" style="left:0px;top:727px;width:1316px;height:54px;background:#efefef"></div>
<svg class="a" style="left:6px;top:742px;" width="26" height="26" viewBox="0 0 26 26"><rect x="1.0" y="1.0" width="6.5" height="6.5" fill="#345a72"/><rect x="9.5" y="1.0" width="6.5" height="6.5" fill="#345a72"/><rect x="18.0" y="1.0" width="6.5" height="6.5" fill="#345a72"/><rect x="1.0" y="9.5" width="6.5" height="6.5" fill="#345a72"/><rect x="9.5" y="9.5" width="6.5" height="6.5" fill="#345a72"/><rect x="18.0" y="9.5" width="6.5" height="6.5" fill="#345a72"/><rect x="1.0" y="18.0" width="6.5" height="6.5" fill="#345a72"/><rect x="9.5" y="18.0" width="6.5" height="6.5" fill="#345a72"/><rect x="18.0" y="18.0" width="6.5" height="6.5" fill="#345a72"/></svg>
<div class="a" style="left:37px;top:738px;width:1px;height:33px;background:#d4d4d4"></div>
<div class="a" style="left:41px;top:738px;width:32px;height:32px;background:#dcdcdc;border:1px solid #cfcfcf;border-radius:2px"></div>
<svg class="a" style="left:43px;top:740px;" width="28" height="28" viewBox="0 0 28 28"><circle cx="19" cy="8" r="7" fill="#18c018"/><rect x="2" y="10" width="12" height="11" fill="#e83818"/><path d="M16 12l9 14H7z" fill="#1870e8"/></svg>
<div class="a" style="left:74px;top:738px;width:32px;height:32px;background:#dcdcdc;border:1px solid #cfcfcf;border-radius:2px"></div>
<svg class="a" style="left:76px;top:740px;" width="28" height="28" viewBox="0 0 28 28"><path d="M5 17l10 5-10 5z" transform="translate(0,-5)" fill="#28b0e8" stroke="#1070a0" stroke-width=".6"/><rect x="17" y="2" width="9" height="9" fill="#f8a028" stroke="#a06010" stroke-width=".6"/><rect x="17" y="17" width="9" height="9" fill="#108048"/><path d="M6 8h14M20 11v6" stroke="#666" stroke-width="1"/><circle cx="15" cy="8" r="2" fill="#fff" stroke="#666"/><circle cx="21" cy="16" r="2" fill="#fff" stroke="#666"/></svg>
<div class="a" style="left:114px;top:738px;width:33px;height:32px;background:#dcdcdc;border:1px solid #cfcfcf;border-radius:2px"></div>
<svg class="a" style="left:117px;top:740px;" width="28" height="28" viewBox="0 0 28 28"><circle cx="14" cy="14" r="12" fill="#2a8a50" stroke="#111" stroke-width="1.5"/><circle cx="17" cy="10" r="8" fill="#5ab880"/><circle cx="19" cy="8" r="5" fill="#8ad8a8"/><circle cx="20" cy="7" r="2.5" fill="#c8f0d8"/><circle cx="14" cy="14" r="12" fill="none" stroke="#111" stroke-width="1.5"/></svg>
<svg class="a" style="left:1067px;top:740px;" width="32" height="28" viewBox="0 0 32 28"><path d="M8 22c-1-6 1-14 8-14s9 8 8 14z" fill="#f8d040" stroke="#c08020" stroke-width=".8"/><path d="M6 22h20" stroke="#c08020" stroke-width="2"/><circle cx="16" cy="24" r="2" fill="#f0a020"/><path d="M4 14c-2 3-2 7 0 10M2 12c-3 4-3 10 0 14M28 14c2 3 2 7 0 10M30 12c3 4 3 10 0 14" stroke="#d04040" stroke-width="1" fill="none"/><path d="M20 2l8 12H12z" fill="#f8d040" stroke="#333" stroke-width="1"/><path d="M20 6v4" stroke="#111" stroke-width="1.6"/><circle cx="20" cy="12" r=".9" fill="#111"/></svg>
<svg class="a" style="left:1123px;top:744px;" width="18" height="22" viewBox="0 0 18 22"><path d="M1 1l15 10L1 21z" fill="#3a78c8"/></svg>
<svg class="a" style="left:1148px;top:751px;" width="11" height="7" viewBox="0 0 11 7"><path d="M1 1h9L5.5 6z" fill="#555"/></svg>
<svg class="a" style="left:1162px;top:744px;" width="30" height="26" viewBox="0 0 30 26"><circle cx="21" cy="10" r="8" fill="#e83818"/><path d="M8 1v22M2 17l6 7 6-7" stroke="#18c018" stroke-width="2.2" fill="none"/></svg>
<svg class="a" style="left:1195px;top:751px;" width="11" height="7" viewBox="0 0 11 7"><path d="M1 1h9L5.5 6z" fill="#555"/></svg>
<div class="a" style="left:1218px;top:745px;width:4px;height:20px;background:#a8a8a8"></div>
<div class="a" style="left:1226px;top:745px;width:4px;height:20px;background:#a8a8a8"></div>
<div class="a" style="left:1249px;top:747px;width:16px;height:16px;background:#a8a8a8"></div>
<svg class="a" style="left:1277px;top:742px;" width="30" height="28" viewBox="0 0 30 28"><rect x="1" y="1" width="25" height="17" rx="2" fill="#5a9ae0" stroke="#2a5a9a"/><rect x="3" y="3" width="21" height="3" fill="#fff"/><circle cx="7" cy="12" r="3" fill="#fff" stroke="#2a4a8a"/><circle cx="19" cy="12" r="3" fill="#fff" stroke="#2a4a8a"/><circle cx="7" cy="12" r="1" fill="#2a4a8a"/><circle cx="19" cy="12" r="1" fill="#2a4a8a"/><path d="M16 25l3-6 9-9 2 2-9 9z" fill="#f0a040" stroke="#905020" stroke-width=".6"/><path d="M16 25l2-4 2 2z" fill="#222"/></svg>
<div class="a" style="left:13px;top:781px;width:1303px;height:5px;background:#d4d4d4"></div>
</body></html>
